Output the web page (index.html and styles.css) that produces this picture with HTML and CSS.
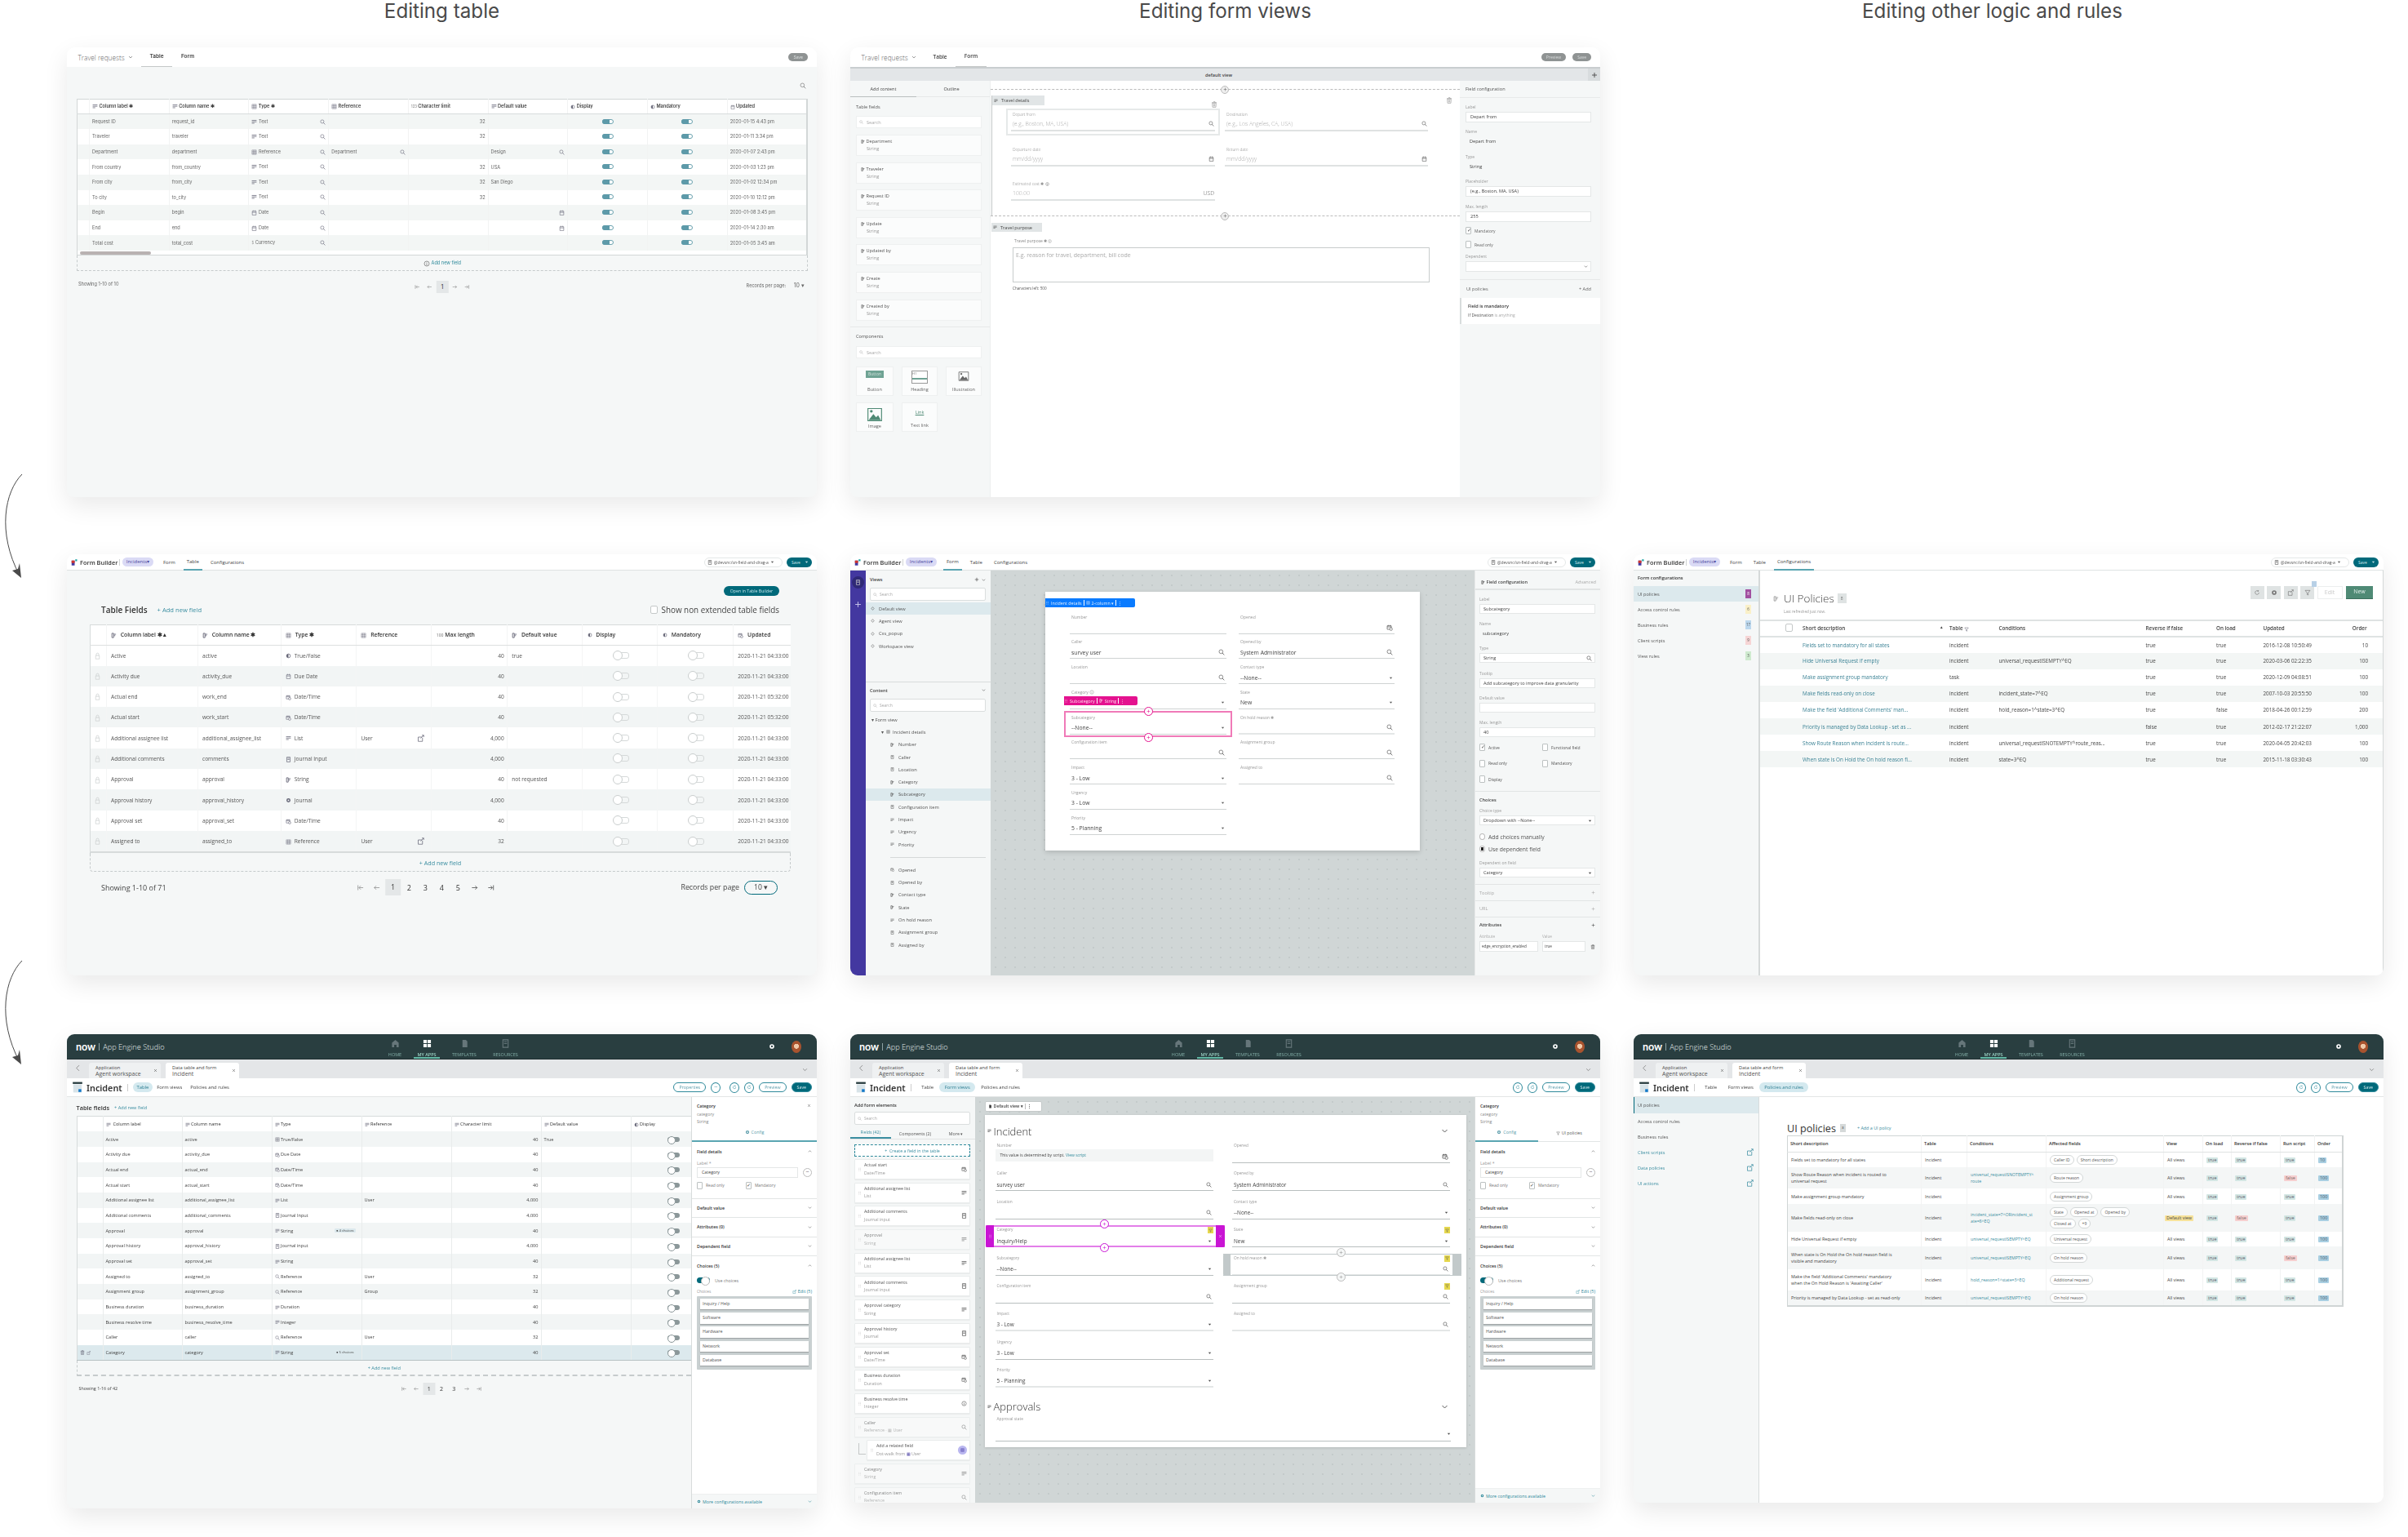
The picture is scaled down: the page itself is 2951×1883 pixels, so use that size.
FILE: index.html
```html
<!DOCTYPE html>
<html lang="en">
<head>
<meta charset="utf-8">
<title>Editing table, form views and logic</title>
<link rel="stylesheet" href="styles.css">
</head>
<body>
<svg class="sprite" aria-hidden="true">
<symbol id="s" viewBox="0 0 24 24"><circle cx="10" cy="10" r="7" fill="none" stroke="currentColor" stroke-width="2"/><path d="M15 15l7 7" stroke="currentColor" stroke-width="2.4"/></symbol>
<symbol id="cal" viewBox="0 0 24 24"><path d="M4 6h16v16H4zM4 11h16M8 2v5M16 2v5" fill="none" stroke="currentColor" stroke-width="2"/></symbol>
<symbol id="dt" viewBox="0 0 24 24"><path d="M3 5h15v13H3zM3 9h15M7 2v4M14 2v4" fill="none" stroke="currentColor" stroke-width="2"/><circle cx="17" cy="17" r="5" fill="#fff" stroke="currentColor" stroke-width="2"/></symbol>
<symbol id="ln" viewBox="0 0 24 24"><path d="M2 5h20M2 11h20M2 17h11" stroke="currentColor" stroke-width="2.6"/></symbol>
<symbol id="st" viewBox="0 0 24 24"><path d="M4 3h7v18H4zM11 7h10M11 13h7" fill="none" stroke="currentColor" stroke-width="3"/></symbol>
<symbol id="gr" viewBox="0 0 24 24"><path d="M3 3h18v18H3zM3 9h18M3 15h18M9 3v18M15 3v18" fill="none" stroke="currentColor" stroke-width="1.6"/></symbol>
<symbol id="lock" viewBox="0 0 24 24"><path d="M6 11h12v11H6zM8 11V7a4 4 0 018 0v4" fill="none" stroke="currentColor" stroke-width="1.8"/></symbol>
<symbol id="ext" viewBox="0 0 24 24"><path d="M16 8H4v14h14V10M12 12L22 2M16 2h6v6" fill="none" stroke="currentColor" stroke-width="2"/></symbol>
<symbol id="hc" viewBox="0 0 24 24"><circle cx="12" cy="12" r="8" fill="none" stroke="currentColor" stroke-width="2.6"/><path d="M12 4a8 8 0 000 16z" fill="currentColor"/></symbol>
<symbol id="chev" viewBox="0 0 24 24"><path d="M4 8l8 8 8-8" fill="none" stroke="currentColor" stroke-width="2.6"/></symbol>
<symbol id="up" viewBox="0 0 24 24"><path d="M4 16l8-8 8 8" fill="none" stroke="currentColor" stroke-width="2.6"/></symbol>
<symbol id="plus" viewBox="0 0 24 24"><path d="M12 3v18M3 12h18" stroke="currentColor" stroke-width="2.6"/></symbol>
<symbol id="car" viewBox="0 0 24 24"><path d="M4 8h16l-8 10z" fill="currentColor"/></symbol>
<symbol id="tr" viewBox="0 0 24 24"><path d="M5 7h14l-1 15H6zM3 5h18M9 2h6v3M10 10v9M14 10v9" fill="none" stroke="currentColor" stroke-width="2"/></symbol>
<symbol id="dots" viewBox="0 0 24 24"><path d="M7 4h3v3H7zM14 4h3v3h-3zM7 11h3v3H7zM14 11h3v3h-3zM7 18h3v3H7zM14 18h3v3h-3z" fill="currentColor"/></symbol>
<symbol id="gear" viewBox="0 0 24 24"><circle cx="12" cy="12" r="6" fill="none" stroke="currentColor" stroke-width="5"/></symbol>
<symbol id="fil" viewBox="0 0 24 24"><path d="M3 4h18l-7 9v8l-4-2v-6z" fill="none" stroke="currentColor" stroke-width="2"/></symbol>
<symbol id="rf" viewBox="0 0 24 24"><path d="M19 12a7 7 0 11-2-5M17 3v4h-4" fill="none" stroke="currentColor" stroke-width="2"/></symbol>
<symbol id="dia" viewBox="0 0 24 24"><path d="M12 3l8 9-8 9-8-9z" fill="none" stroke="currentColor" stroke-width="2.6"/></symbol>
<symbol id="home" viewBox="0 0 24 24"><path d="M12 2L3 10v12h6v-7h6v7h6V10z" fill="currentColor"/></symbol>
<symbol id="apps" viewBox="0 0 24 24"><path d="M2 2h9v9H2zM13 2h9v9h-9zM2 13h9v9H2zM13 13h9v9h-9z" fill="currentColor"/></symbol>
<symbol id="doc" viewBox="0 0 24 24"><path d="M6 2h9l4 4v16H6z" fill="currentColor"/></symbol>
<symbol id="book" viewBox="0 0 24 24"><path d="M5 2h14v20H5zM8 7h8M8 12h8" fill="none" stroke="currentColor" stroke-width="2.4"/></symbol>
<symbol id="info" viewBox="0 0 24 24"><circle cx="12" cy="12" r="9" fill="none" stroke="currentColor" stroke-width="2"/><path d="M12 10v8M12 6v2" stroke="currentColor" stroke-width="2"/></symbol>
<symbol id="tbl" viewBox="0 0 24 24"><path d="M2 1h20v4H2z" fill="#2b3f42"/><path d="M3 6h18v17H3z" fill="#d8e3e8"/><path d="M14 16h6v6h-6z" fill="#1479c9"/></symbol>
<symbol id="first" viewBox="0 0 24 24"><path d="M4 4v16M21 12H8M13 6l-6 6 6 6" fill="none" stroke="currentColor" stroke-width="2"/></symbol>
<symbol id="prev" viewBox="0 0 24 24"><path d="M21 12H4M10 6l-6 6 6 6" fill="none" stroke="currentColor" stroke-width="2"/></symbol>
<symbol id="next" viewBox="0 0 24 24"><path d="M3 12h17M14 6l6 6-6 6" fill="none" stroke="currentColor" stroke-width="2"/></symbol>
<symbol id="last" viewBox="0 0 24 24"><path d="M20 4v16M3 12h13M11 6l6 6-6 6" fill="none" stroke="currentColor" stroke-width="2"/></symbol>
<symbol id="back" viewBox="0 0 24 24"><path d="M16 3l-9 9 9 9" fill="none" stroke="currentColor" stroke-width="2"/></symbol>
<symbol id="img" viewBox="0 0 24 24"><path d="M2 3h20v18H2z" fill="none" stroke="currentColor" stroke-width="1.4"/><path d="M3 20l7-9 4 5 3-3 4 7z" fill="currentColor"/><circle cx="7" cy="7" r="2" fill="currentColor"/></symbol>
<symbol id="cross" viewBox="0 0 24 24"><path d="M5 5l14 14M19 5L5 19" stroke="currentColor" stroke-width="2.4"/></symbol>
</svg>

<svg class="arrow arrow-one" viewBox="0 0 30 130"><path d="M27 1C6 22-4 72 24 125" fill="none" stroke="#4a4a4a" stroke-width="1"/><path d="M26 128l-11-9 7-2 2-7z" fill="#4a4a4a"/></svg>
<svg class="arrow arrow-two" viewBox="0 0 30 130"><path d="M27 1C6 22-4 72 24 125" fill="none" stroke="#4a4a4a" stroke-width="1"/><path d="M26 128l-11-9 7-2 2-7z" fill="#4a4a4a"/></svg>

<main class="board">
<div class="titles">
<h2>Editing table</h2><h2>Editing form views</h2><h2 class="t3">Editing other logic and rules</h2>
</div>

<div class="row">
<!-- A1 -->
<section class="panel ph1 fa">
<header class="ah"><span class="ah-t">Travel requests <svg class="i6"><use href="#chev"/></svg></span><nav class="ah-n"><a class="on">Table</a><a>Form</a></nav><span class="ah-b"><b>Save</b></span></header>
<div class="a1b">
<div class="a1s"><svg class="i8"><use href="#s"/></svg></div>
<table class="tb a1t">
<colgroup><col><col><col><col><col><col><col><col><col><col></colgroup>
<tr><th></th><th><svg class="i7"><use href="#ln"/></svg> Column label ✱</th><th><svg class="i7"><use href="#ln"/></svg> Column name ✱</th><th><svg class="i7"><use href="#gr"/></svg> Type ✱</th><th><svg class="i7"><use href="#gr"/></svg> Reference</th><th><span class="dim">123</span> Character limit</th><th><svg class="i7"><use href="#ln"/></svg> Default value</th><th><svg class="i6"><use href="#hc"/></svg> Display</th><th><svg class="i6"><use href="#hc"/></svg> Mandatory</th><th><svg class="i6"><use href="#cal"/></svg> Updated</th></tr>
<tr><td></td><td>Request ID</td><td>request_id</td><td class="ty"><svg class="i7"><use href="#ln"/></svg> Text<svg class="i7 fr"><use href="#s"/></svg></td><td></td><td class="n">32</td><td></td><td class="c"><i class="ta"></i></td><td class="c"><i class="ta"></i></td><td>2020-01-15 4:43 pm</td></tr>
<tr><td></td><td>Traveler</td><td>traveler</td><td class="ty"><svg class="i7"><use href="#ln"/></svg> Text<svg class="i7 fr"><use href="#s"/></svg></td><td></td><td class="n">32</td><td></td><td class="c"><i class="ta"></i></td><td class="c"><i class="ta"></i></td><td>2020-01-11 3:34 pm</td></tr>
<tr><td></td><td>Department</td><td>department</td><td class="ty"><svg class="i7"><use href="#gr"/></svg> Reference<svg class="i7 fr"><use href="#s"/></svg></td><td class="ty">Department<svg class="i7 fr"><use href="#s"/></svg></td><td></td><td class="ty">Design<svg class="i7 fr"><use href="#s"/></svg></td><td class="c"><i class="ta"></i></td><td class="c"><i class="ta"></i></td><td>2020-01-07 2:43 pm</td></tr>
<tr><td></td><td>From country</td><td>from_country</td><td class="ty"><svg class="i7"><use href="#ln"/></svg> Text<svg class="i7 fr"><use href="#s"/></svg></td><td></td><td class="n">32</td><td>USA</td><td class="c"><i class="ta"></i></td><td class="c"><i class="ta"></i></td><td>2020-01-03 1:23 pm</td></tr>
<tr><td></td><td>From city</td><td>from_city</td><td class="ty"><svg class="i7"><use href="#ln"/></svg> Text<svg class="i7 fr"><use href="#s"/></svg></td><td></td><td class="n">32</td><td>San Diego</td><td class="c"><i class="ta"></i></td><td class="c"><i class="ta"></i></td><td>2020-01-02 12:34 pm</td></tr>
<tr><td></td><td>To city</td><td>to_city</td><td class="ty"><svg class="i7"><use href="#ln"/></svg> Text<svg class="i7 fr"><use href="#s"/></svg></td><td></td><td class="n">32</td><td></td><td class="c"><i class="ta"></i></td><td class="c"><i class="ta"></i></td><td>2020-01-10 12:12 pm</td></tr>
<tr><td></td><td>Begin</td><td>begin</td><td class="ty"><svg class="i7"><use href="#cal"/></svg> Date<svg class="i7 fr"><use href="#s"/></svg></td><td></td><td></td><td class="ty"><svg class="i7 fr"><use href="#cal"/></svg></td><td class="c"><i class="ta"></i></td><td class="c"><i class="ta"></i></td><td>2020-01-08 3:45 pm</td></tr>
<tr><td></td><td>End</td><td>end</td><td class="ty"><svg class="i7"><use href="#cal"/></svg> Date<svg class="i7 fr"><use href="#s"/></svg></td><td></td><td></td><td class="ty"><svg class="i7 fr"><use href="#cal"/></svg></td><td class="c"><i class="ta"></i></td><td class="c"><i class="ta"></i></td><td>2020-01-14 2:30 am</td></tr>
<tr><td></td><td>Total cost</td><td>total_cost</td><td class="ty"><span class="dim">$</span> Currency<svg class="i7 fr"><use href="#s"/></svg></td><td></td><td></td><td></td><td class="c"><i class="ta"></i></td><td class="c"><i class="ta"></i></td><td>2020-01-05 3:45 am</td></tr>
</table>
<div class="a1sb"><i></i></div>
<div class="addrow a1add"><svg class="i8"><use href="#info"/></svg> Add new field</div>
<div class="pg a1pg"><span>Showing 1-10 of 10</span><span class="pgc"><svg class="i7"><use href="#first"/></svg><svg class="i7"><use href="#prev"/></svg><b>1</b><svg class="i7"><use href="#next"/></svg><svg class="i7"><use href="#last"/></svg></span><span class="pgr">Records per page: <em>10 ▾</em></span></div>
</div>
</section>

<!-- A2 -->
<section class="panel ph1 fo">
<header class="ah"><span class="ah-t">Travel requests <svg class="i6"><use href="#chev"/></svg></span><nav class="ah-n ah-n2"><a>Table</a><a class="on">Form</a></nav><span class="ah-b"><b>Preview</b><b>Save</b></span></header>
<div class="a2v"><span>default view</span><i><svg class="i8"><use href="#plus"/></svg></i></div>
<div class="a2m">
<aside class="a2l">
<div class="a2tabs"><span class="on">Add content</span><span>Outline</span></div>
<h4>Table fields</h4>
<div class="a2in"><svg class="i5"><use href="#s"/></svg> Search</div>
<div class="a2c"><b><svg class="i5"><use href="#st"/></svg> Department</b><span>String</span></div>
<div class="a2c"><b><svg class="i5"><use href="#st"/></svg> Traveler</b><span>String</span></div>
<div class="a2c"><b><svg class="i5"><use href="#st"/></svg> Request ID</b><span>String</span></div>
<div class="a2c"><b><svg class="i5"><use href="#st"/></svg> Update</b><span>String</span></div>
<div class="a2c"><b><svg class="i5"><use href="#st"/></svg> Updated by</b><span>String</span></div>
<div class="a2c"><b><svg class="i5"><use href="#st"/></svg> Create</b><span>String</span></div>
<div class="a2c"><b><svg class="i5"><use href="#st"/></svg> Created by</b><span>String</span></div>
<hr class="a2hr">
<h4>Components</h4>
<div class="a2in"><svg class="i5"><use href="#s"/></svg> Search</div>
<div class="a2g">
<div><span class="btnico">Button</span><p>Button</p></div>
<div><span class="hico">H1</span><p>Heading</p></div>
<div><svg class="i14"><use href="#img"/></svg><p>Illustration</p></div>
<div><svg class="i20 green"><use href="#img"/></svg><p>Image</p></div>
<div><u class="lnk">Link</u><p>Text link</p></div>
</div>
</aside>
<div class="a2c-main">
<div class="dl"><i><svg class="i5"><use href="#plus"/></svg></i></div>
<div class="a2s">
<div class="stab"><svg class="i5"><use href="#ln"/></svg> Travel details</div>
<span class="a2tr1"><svg class="i8"><use href="#tr"/></svg></span><span class="a2tr2"><svg class="i8"><use href="#tr"/></svg></span>
<div class="a2f">
<div class="ff sel"><label>Depart from</label><div class="v ph">(e.g., Boston, MA, USA)<svg class="i7"><use href="#s"/></svg></div></div>
<div class="ff"><label>Destination</label><div class="v ph">(e.g., Los Angeles, CA, USA)<svg class="i7"><use href="#s"/></svg></div></div>
<div class="ff"><label>Departure date</label><div class="v ph">mm/dd/yyyy<svg class="i7"><use href="#cal"/></svg></div></div>
<div class="ff"><label>Return date</label><div class="v ph">mm/dd/yyyy<svg class="i7 green"><use href="#cal"/></svg></div></div>
<div class="ff"><label>Estimated cost ✱ <svg class="i5"><use href="#info"/></svg></label><div class="v ph">100.00<em>USD</em></div></div>
</div>
</div>
<div class="dl dl2"><i><svg class="i5"><use href="#plus"/></svg></i></div>
<div class="stab st2"><svg class="i5"><use href="#ln"/></svg> Travel purpose</div>
<div class="a2p"><label>Travel purpose ✱ <svg class="i5"><use href="#info"/></svg></label>
<div class="ta2">E.g. reason for travel, department, bill code</div>
<small>Characters left: 500</small></div>
</div>
<aside class="a2r">
<h4 class="a2rh">Field configuration</h4>
<div class="cf"><label>Label</label><div class="in">Depart from</div></div>
<div class="cf"><label>Name</label><div class="pl">Depart from</div></div>
<div class="cf"><label>Type</label><div class="pl">String</div></div>
<div class="cf"><label>Placeholder</label><div class="in">(e.g., Boston, MA, USA)</div></div>
<div class="cf"><label>Max. length</label><div class="in">255</div></div>
<div class="ck a2ck"><i class="on"></i>Mandatory</div>
<div class="ck a2ck"><i></i>Read only</div>
<div class="cf"><label>Dependent</label><div class="in sl"><svg class="i5"><use href="#chev"/></svg></div></div>
<div class="a2pol"><span>UI policies</span><span>+ Add</span></div>
<div class="a2card"><b>Field is mandatory</b><p><em>If Destination</em> is anything</p></div>
</aside>
</div>
</section>
<div class="empty"></div>
</div>

<div class="row r2">
<!-- B1 -->
<section class="panel ph2">
<header class="fb"><span class="fbl"><svg class="lg" viewBox="0 0 12 12"><path d="M1 3h5v8H1z" fill="#4338a0"/><path d="M1 3h5v4H1z" fill="#d0342c"/><path d="M7 1h3v3H7z" fill="#1aa3a3"/></svg><b>Form Builder</b></span><span class="fbp">Incidents▾</span><nav class="fbn"><a>Form</a><a class="on">Table</a><a>Configurations</a></nav><span class="fbr"><span class="fbs"><svg class="i6"><use href="#book"/></svg> @devsnc/sn-field-and-drag-a <svg class="i5"><use href="#car"/></svg></span><span class="fbsv">Save <svg class="i5"><use href="#car"/></svg></span></span></header>
<div class="b1b">
<div class="b1top"><span class="b1o">Open in Table Builder</span></div>
<div class="b1h"><h3>Table Fields</h3><a>+ Add new field</a><span><i class="cb"></i>Show non extended table fields</span></div>
<table class="tb b1t">
<colgroup><col><col><col><col><col><col><col><col><col><col></colgroup>
<tr><th></th><th><svg class="i7"><use href="#st"/></svg> Column label ✱ ▴</th><th><svg class="i7"><use href="#st"/></svg> Column name ✱</th><th><svg class="i7"><use href="#gr"/></svg> Type ✱</th><th><svg class="i7"><use href="#gr"/></svg> Reference</th><th><span class="dim">100</span> Max length</th><th><svg class="i7"><use href="#st"/></svg> Default value</th><th><svg class="i6"><use href="#hc"/></svg> Display</th><th><svg class="i6"><use href="#hc"/></svg> Mandatory</th><th><svg class="i7"><use href="#dt"/></svg> Updated</th></tr>
<tr><td><svg class="i9 lk"><use href="#lock"/></svg></td><td>Active</td><td>active</td><td><svg class="i7"><use href="#hc"/></svg> True/False</td><td></td><td class="n">40</td><td>true</td><td class="c"><i class="tf"></i></td><td class="c"><i class="tf"></i></td><td>2020-11-21 04:33:00</td></tr>
<tr><td><svg class="i9 lk"><use href="#lock"/></svg></td><td>Activity due</td><td>activity_due</td><td><svg class="i7"><use href="#cal"/></svg> Due Date</td><td></td><td class="n">40</td><td></td><td class="c"><i class="tf"></i></td><td class="c"><i class="tf"></i></td><td>2020-11-21 04:33:00</td></tr>
<tr><td><svg class="i9 lk"><use href="#lock"/></svg></td><td>Actual end</td><td>work_end</td><td><svg class="i7"><use href="#dt"/></svg> Date/Time</td><td></td><td class="n">40</td><td></td><td class="c"><i class="tf"></i></td><td class="c"><i class="tf"></i></td><td>2020-11-21 05:32:00</td></tr>
<tr><td><svg class="i9 lk"><use href="#lock"/></svg></td><td>Actual start</td><td>work_start</td><td><svg class="i7"><use href="#dt"/></svg> Date/Time</td><td></td><td class="n">40</td><td></td><td class="c"><i class="tf"></i></td><td class="c"><i class="tf"></i></td><td>2020-11-21 05:32:00</td></tr>
<tr><td><svg class="i9 lk"><use href="#lock"/></svg></td><td>Additional assignee list</td><td>additional_assignee_list</td><td><svg class="i7"><use href="#ln"/></svg> List</td><td class="ty">User<svg class="i9 fr"><use href="#ext"/></svg></td><td class="n">4,000</td><td></td><td class="c"><i class="tf"></i></td><td class="c"><i class="tf"></i></td><td>2020-11-21 04:33:00</td></tr>
<tr><td><svg class="i9 lk"><use href="#lock"/></svg></td><td>Additional comments</td><td>comments</td><td><svg class="i7"><use href="#book"/></svg> Journal Input</td><td></td><td class="n">4,000</td><td></td><td class="c"><i class="tf"></i></td><td class="c"><i class="tf"></i></td><td>2020-11-21 04:33:00</td></tr>
<tr><td><svg class="i9 lk"><use href="#lock"/></svg></td><td>Approval</td><td>approval</td><td><svg class="i7"><use href="#st"/></svg> String</td><td></td><td class="n">40</td><td>not requested</td><td class="c"><i class="tf"></i></td><td class="c"><i class="tf"></i></td><td>2020-11-21 04:33:00</td></tr>
<tr><td><svg class="i9 lk"><use href="#lock"/></svg></td><td>Approval history</td><td>approval_history</td><td><svg class="i7"><use href="#gear"/></svg> Journal</td><td></td><td class="n">4,000</td><td></td><td class="c"><i class="tf"></i></td><td class="c"><i class="tf"></i></td><td>2020-11-21 04:33:00</td></tr>
<tr><td><svg class="i9 lk"><use href="#lock"/></svg></td><td>Approval set</td><td>approval_set</td><td><svg class="i7"><use href="#dt"/></svg> Date/Time</td><td></td><td class="n">40</td><td></td><td class="c"><i class="tf"></i></td><td class="c"><i class="tf"></i></td><td>2020-11-21 04:33:00</td></tr>
<tr><td><svg class="i9 lk"><use href="#lock"/></svg></td><td>Assigned to</td><td>assigned_to</td><td><svg class="i7"><use href="#gr"/></svg> Reference</td><td class="ty">User<svg class="i9 fr"><use href="#ext"/></svg></td><td class="n">32</td><td></td><td class="c"><i class="tf"></i></td><td class="c"><i class="tf"></i></td><td>2020-11-21 04:33:00</td></tr>
</table>
<div class="addrow b1add">+ Add new field</div>
<div class="pg b1pg"><span>Showing 1-10 of 71</span><span class="pgc"><svg class="i9"><use href="#first"/></svg><svg class="i9"><use href="#prev"/></svg><b>1</b><u>2</u><u>3</u><u>4</u><u>5</u><svg class="i9 dk"><use href="#next"/></svg><svg class="i9 dk"><use href="#last"/></svg></span><span class="pgr">Records per page <em>10 ▾</em></span></div>
</div>
</section>

<!-- B2 -->
<section class="panel ph2">
<header class="fb"><span class="fbl"><svg class="lg" viewBox="0 0 12 12"><path d="M1 3h5v8H1z" fill="#4338a0"/><path d="M1 3h5v4H1z" fill="#d0342c"/><path d="M7 1h3v3H7z" fill="#1aa3a3"/></svg><b>Form Builder</b></span><span class="fbp">Incidents▾</span><nav class="fbn"><a class="on">Form</a><a>Table</a><a>Configurations</a></nav><span class="fbr"><span class="fbs"><svg class="i6"><use href="#book"/></svg> @devsnc/sn-field-and-drag-a <svg class="i5"><use href="#car"/></svg></span><span class="fbsv">Save <svg class="i5"><use href="#car"/></svg></span></span></header>
<div class="b2m">
<div class="rail"><i><svg class="i7"><use href="#book"/></svg></i><svg class="i9"><use href="#plus"/></svg></div>
<aside class="b2l">
<div class="b2sec"><span>Views</span><em><svg class="i6"><use href="#plus"/></svg><svg class="i5"><use href="#chev"/></svg></em></div>
<div class="b2in"><svg class="i5"><use href="#s"/></svg> Search</div>
<ul class="tree tv">
<li class="on"><svg class="i5"><use href="#dia"/></svg> Default view</li>
<li><svg class="i5"><use href="#dia"/></svg> Agent view</li>
<li><svg class="i5"><use href="#dia"/></svg> Cxs_popup</li>
<li><svg class="i5"><use href="#dia"/></svg> Workspace view</li>
</ul>
<div class="b2sec b2sec2"><span>Content</span><em><svg class="i5"><use href="#chev"/></svg></em></div>
<div class="b2in"><svg class="i5"><use href="#s"/></svg> Search</div>
<ul class="tree tc">
<li class="l0">▾ Form view</li>
<li class="l1">▾ <svg class="i5"><use href="#gr"/></svg> Incident details</li>
<li class="l2"><svg class="i5"><use href="#st"/></svg> Number</li>
<li class="l2"><svg class="i5"><use href="#book"/></svg> Caller</li>
<li class="l2"><svg class="i5"><use href="#book"/></svg> Location</li>
<li class="l2"><svg class="i5"><use href="#st"/></svg> Category</li>
<li class="l2 on"><svg class="i5"><use href="#st"/></svg> Subcategory</li>
<li class="l2"><svg class="i5"><use href="#book"/></svg> Configuration item</li>
<li class="l2"><svg class="i5"><use href="#ln"/></svg> Impact</li>
<li class="l2"><svg class="i5"><use href="#ln"/></svg> Urgency</li>
<li class="l2"><svg class="i5"><use href="#ln"/></svg> Priority</li>
<li class="sep"></li>
<li class="l2"><svg class="i5"><use href="#dt"/></svg> Opened</li>
<li class="l2"><svg class="i5"><use href="#book"/></svg> Opened by</li>
<li class="l2"><svg class="i5"><use href="#st"/></svg> Contact type</li>
<li class="l2"><svg class="i5"><use href="#st"/></svg> State</li>
<li class="l2"><svg class="i5"><use href="#ln"/></svg> On hold reason</li>
<li class="l2"><svg class="i5"><use href="#book"/></svg> Assignment group</li>
<li class="l2"><svg class="i5"><use href="#book"/></svg> Assigned by</li>
</ul>
</aside>
<div class="canvas b2c">
<div class="b2card">
<div class="blu"><svg class="i5"><use href="#dots"/></svg> Incident details <s></s> <svg class="i5"><use href="#gr"/></svg> 2-column ▾ <s></s> ⋮</div>
<div class="b2g">
<div class="bf"><label>Number</label><div class="v"></div></div>
<div class="bf"><label>Opened</label><div class="v"><svg class="i8"><use href="#dt"/></svg></div></div>
<div class="bf"><label>Caller</label><div class="v">survey user<svg class="i8"><use href="#s"/></svg></div></div>
<div class="bf"><label>Opened by</label><div class="v">System Administrator<svg class="i8"><use href="#s"/></svg></div></div>
<div class="bf"><label>Location</label><div class="v"><svg class="i8"><use href="#s"/></svg></div></div>
<div class="bf"><label>Contact type</label><div class="v">--None--<svg class="i5"><use href="#car"/></svg></div></div>
<div class="bf cat"><label>Category <svg class="i6"><use href="#info"/></svg></label><div class="v"><svg class="i5"><use href="#car"/></svg></div><div class="pnk"><svg class="i5"><use href="#dots"/></svg> Subcategory <s></s> <svg class="i5"><use href="#st"/></svg> String <s></s> ⋮</div></div>
<div class="bf"><label>State</label><div class="v">New<svg class="i5"><use href="#car"/></svg></div></div>
<div class="bf sub"><label>Subcategory</label><div class="v">--None--<svg class="i5"><use href="#car"/></svg></div><i class="pc pc1"><svg class="i5"><use href="#plus"/></svg></i><i class="pc pc2"><svg class="i5"><use href="#plus"/></svg></i></div>
<div class="bf"><label>On hold reason ✱</label><div class="v lt"><svg class="i8"><use href="#s"/></svg></div></div>
<div class="bf"><label>Configuration item</label><div class="v"><svg class="i8"><use href="#s"/></svg></div></div>
<div class="bf"><label>Assignment group</label><div class="v"><svg class="i8"><use href="#s"/></svg></div></div>
<div class="bf"><label>Impact</label><div class="v">3 - Low<svg class="i5"><use href="#car"/></svg></div></div>
<div class="bf"><label>Assigned to</label><div class="v"><svg class="i8"><use href="#s"/></svg></div></div>
<div class="bf"><label>Urgency</label><div class="v">3 - Low<svg class="i5"><use href="#car"/></svg></div></div>
<div></div>
<div class="bf"><label>Priority</label><div class="v">5 - Planning<svg class="i5"><use href="#car"/></svg></div></div>
</div>
</div>
</div>
<aside class="b2r">
<div class="b2rh"><b><svg class="i5"><use href="#st"/></svg> Field configuration</b><span>Advanced</span></div>
<div class="cg"><label>Label</label><div class="in">Subcategory</div></div>
<div class="cg"><label>Name</label><div class="pl">subcategory</div></div>
<div class="cg"><label>Type</label><div class="in">String<svg class="i7"><use href="#s"/></svg></div></div>
<div class="cg"><label>Tooltip</label><div class="in">Add subcategory to improve data granularity</div></div>
<div class="cg"><label>Default value</label><div class="in"></div></div>
<div class="cg"><label>Max. length</label><div class="in">40</div></div>
<div class="b2cks"><div class="ck"><i class="on"></i>Active</div><div class="ck"><i></i>Functional field</div><div class="ck"><i></i>Read only</div><div class="ck"><i></i>Mandatory</div><div class="ck"><i></i>Display</div></div>
<div class="b2bk">
<h5>Choices</h5>
<div class="cg"><label>Choice type</label><div class="in">Dropdown with --None--<svg class="i5"><use href="#car"/></svg></div></div>
<div class="rd"><i></i>Add choices manually</div>
<div class="rd"><i class="on"></i>Use dependent field</div>
<div class="cg dp"><label>Dependent on field</label><div class="in">Category<svg class="i5"><use href="#car"/></svg></div></div>
</div>
<div class="b2col"><span>Tooltip</span><svg class="i5"><use href="#plus"/></svg></div>
<div class="b2col"><span>URL</span><svg class="i5"><use href="#plus"/></svg></div>
<div class="b2col dk"><b>Attributes</b><svg class="i5"><use href="#plus"/></svg></div>
<div class="attr"><div><label>Attribute</label><div class="in">edge_encryption_enabled</div></div><div><label>Value</label><div class="in">true</div></div><svg class="i6"><use href="#tr"/></svg></div>
</aside>
</div>
</section>

<!-- B3 -->
<section class="panel ph2">
<header class="fb"><span class="fbl"><svg class="lg" viewBox="0 0 12 12"><path d="M1 3h5v8H1z" fill="#4338a0"/><path d="M1 3h5v4H1z" fill="#d0342c"/><path d="M7 1h3v3H7z" fill="#1aa3a3"/></svg><b>Form Builder</b></span><span class="fbp">Incidents▾</span><nav class="fbn"><a>Form</a><a>Table</a><a class="on">Configurations</a></nav><span class="fbr"><span class="fbs"><svg class="i6"><use href="#book"/></svg> @devsnc/sn-field-and-drag-a <svg class="i5"><use href="#car"/></svg></span><span class="fbsv">Save <svg class="i5"><use href="#car"/></svg></span></span></header>
<div class="b3m">
<aside class="b3l">
<h5>Form configurations</h5>
<ul><li class="on">UI policies<i class="bp">8</i></li><li>Access control rules<i class="by">6</i></li><li>Business rules<i class="bb">17</i></li><li>Client scripts<i class="br">9</i></li><li>View rules<i class="bg">3</i></li></ul>
</aside>
<div class="b3r">
<div class="b3h">
<svg class="i7"><use href="#st"/></svg>
<div class="b3ti"><h3>UI Policies <i>8</i></h3><small>Last refreshed just now.</small></div>
<div class="b3b"><i><svg class="i8"><use href="#rf"/></svg></i><i><svg class="i8"><use href="#gear"/></svg></i><i><svg class="i8"><use href="#ext"/></svg></i><i class="fbadge"><svg class="i8"><use href="#fil"/></svg></i><span class="edit">Edit</span><span class="new">New</span></div>
</div>
<table class="tb b3t">
<colgroup><col><col><col><col><col><col><col><col></colgroup>
<tr><th><i class="cb"></i></th><th>Short description <span class="fr">▴</span></th><th>Table <svg class="i6"><use href="#fil"/></svg></th><th>Conditions</th><th>Reverse if false</th><th>On load</th><th>Updated</th><th>Order</th></tr>
<tr><td></td><td class="l">Fields set to mandatory for all states</td><td>incident</td><td></td><td>true</td><td>true</td><td>2016-12-08 10:50:49</td><td class="n">10</td></tr>
<tr><td></td><td class="l">Hide Universal Request if empty</td><td>incident</td><td>universal_requestISEMPTY^EQ</td><td>true</td><td>true</td><td>2020-03-06 02:22:35</td><td class="n">100</td></tr>
<tr><td></td><td class="l">Make assignment group mandatory</td><td>task</td><td></td><td>true</td><td>true</td><td>2020-12-09 04:08:51</td><td class="n">100</td></tr>
<tr><td></td><td class="l">Make fields read-only on close</td><td>incident</td><td>incident_state=7^EQ</td><td>true</td><td>true</td><td>2007-10-03 20:55:50</td><td class="n">100</td></tr>
<tr><td></td><td class="l">Make the field 'Additional Comments' man...</td><td>incident</td><td>hold_reason=1^state=3^EQ</td><td>true</td><td>false</td><td>2018-04-26 00:12:59</td><td class="n">200</td></tr>
<tr><td></td><td class="l">Priority is managed by Data Lookup - set as ...</td><td>incident</td><td></td><td>false</td><td>true</td><td>2012-02-17 21:22:07</td><td class="n">1,000</td></tr>
<tr><td></td><td class="l">Show Route Reason when incident is route...</td><td>incident</td><td>universal_requestISNOTEMPTY^route_reas...</td><td>true</td><td>true</td><td>2020-04-05 20:42:03</td><td class="n">100</td></tr>
<tr><td></td><td class="l">When state is On Hold the On hold reason fi...</td><td>incident</td><td>state=3^EQ</td><td>true</td><td>true</td><td>2015-11-18 03:30:43</td><td class="n">100</td></tr>
</table>
</div>
</div>
</section>
</div>

<div class="row r3">
<!-- C1 -->
<section class="panel ph3">
<header class="cb1"><span class="brand"><b>now</b><s></s>App Engine Studio</span><nav class="cnav"><a><svg class="i11"><use href="#home"/></svg>HOME</a><a class="on"><svg class="i11"><use href="#apps"/></svg>MY APPS</a><a><svg class="i11"><use href="#doc"/></svg>TEMPLATES</a><a><svg class="i11"><use href="#book"/></svg>RESOURCES</a></nav><span class="cu"><svg class="i8"><use href="#gear"/></svg><i class="av"></i></span></header>
<div class="ctabs"><svg class="i9 bk"><use href="#back"/></svg><div class="ct"><b>Application</b><span>Agent workspace</span><svg class="i5"><use href="#cross"/></svg></div><div class="ct on"><b>Data table and form</b><span>Incident</span><svg class="i5"><use href="#cross"/></svg></div><svg class="i7 ctc"><use href="#chev"/></svg></div>
<div class="ctitle t1"><svg class="i14"><use href="#tbl"/></svg><h3>Incident</h3><s></s><a class="on">Table</a><a>Form views</a><a>Policies and rules</a><span class="cact"><em>Properties</em><u>•••</u><u class="gp"><svg class="i6"><use href="#rf"/></svg></u><u><svg class="i6"><use href="#rf"/></svg></u><em>Preview</em><em class="sv">Save</em></span></div>
<div class="c1m">
<div class="c1b">
<div class="c1h"><h4>Table fields</h4><a>+ Add new field</a></div>
<table class="tb c1t">
<colgroup><col><col><col><col><col><col><col><col></colgroup>
<tr><th></th><th><svg class="i6"><use href="#ln"/></svg> &nbsp;Column label</th><th><svg class="i6"><use href="#ln"/></svg> Column name</th><th><svg class="i6"><use href="#ln"/></svg> Type</th><th><svg class="i6"><use href="#ln"/></svg> Reference</th><th><svg class="i6"><use href="#ln"/></svg> Character limit</th><th><svg class="i6"><use href="#ln"/></svg> Default value</th><th><svg class="i6"><use href="#hc"/></svg> Display</th></tr>
<tr><td></td><td>Active</td><td>active</td><td><svg class="i6"><use href="#gr"/></svg> True/False</td><td></td><td class="n">40</td><td>True</td><td class="tr"><i class="tc2"></i></td></tr>
<tr><td></td><td>Activity due</td><td>activity_due</td><td><svg class="i6"><use href="#dt"/></svg> Due Date</td><td></td><td class="n">40</td><td></td><td class="tr"><i class="tc2"></i></td></tr>
<tr><td></td><td>Actual end</td><td>actual_end</td><td><svg class="i6"><use href="#dt"/></svg> Date/Time</td><td></td><td class="n">40</td><td></td><td class="tr"><i class="tc2"></i></td></tr>
<tr><td></td><td>Actual start</td><td>actual_start</td><td><svg class="i6"><use href="#dt"/></svg> Date/Time</td><td></td><td class="n">40</td><td></td><td class="tr"><i class="tc2"></i></td></tr>
<tr><td></td><td>Additional assignee list</td><td>additional_assignee_list</td><td><svg class="i6"><use href="#ln"/></svg> List</td><td>User</td><td class="n">4,000</td><td></td><td class="tr"><i class="tc2"></i></td></tr>
<tr><td></td><td>Additional comments</td><td>additional_comments</td><td><svg class="i6"><use href="#book"/></svg> Journal Input</td><td></td><td class="n">4,000</td><td></td><td class="tr"><i class="tc2"></i></td></tr>
<tr><td></td><td>Approval</td><td>approval</td><td class="ty"><svg class="i6"><use href="#ln"/></svg> String<span class="chip">● 4 choices</span></td><td></td><td class="n">40</td><td></td><td class="tr"><i class="tc2"></i></td></tr>
<tr><td></td><td>Approval history</td><td>approval_history</td><td><svg class="i6"><use href="#book"/></svg> Journal input</td><td></td><td class="n">4,000</td><td></td><td class="tr"><i class="tc2"></i></td></tr>
<tr><td></td><td>Approval set</td><td>approval_set</td><td><svg class="i6"><use href="#ln"/></svg> String</td><td></td><td class="n">40</td><td></td><td class="tr"><i class="tc2"></i></td></tr>
<tr><td></td><td>Assigned to</td><td>assigned_to</td><td><svg class="i6"><use href="#s"/></svg> Reference</td><td>User</td><td class="n">32</td><td></td><td class="tr"><i class="tc2"></i></td></tr>
<tr><td></td><td>Assignment group</td><td>assignment_group</td><td><svg class="i6"><use href="#s"/></svg> Reference</td><td>Group</td><td class="n">32</td><td></td><td class="tr"><i class="tc2"></i></td></tr>
<tr><td></td><td>Business duration</td><td>business_duration</td><td><svg class="i6"><use href="#ln"/></svg> Duration</td><td></td><td class="n">40</td><td></td><td class="tr"><i class="tc2"></i></td></tr>
<tr><td></td><td>Business resolve time</td><td>business_resolve_time</td><td><svg class="i6"><use href="#ln"/></svg> Integer</td><td></td><td class="n">40</td><td></td><td class="tr"><i class="tc2"></i></td></tr>
<tr><td></td><td>Caller</td><td>caller</td><td><svg class="i6"><use href="#s"/></svg> Reference</td><td>User</td><td class="n">32</td><td></td><td class="tr"><i class="tc2"></i></td></tr>
<tr class="act"><td><svg class="i6"><use href="#tr"/></svg> &nbsp;<svg class="i5"><use href="#ext"/></svg></td><td>Category</td><td>category</td><td class="ty"><svg class="i6"><use href="#ln"/></svg> String<span class="chip nb">● 5 choices</span></td><td></td><td class="n">40</td><td></td><td class="tr"><i class="tc2"></i></td></tr>
</table>
<div class="addrow c1add">+ Add new field</div>
<div class="pg c1pg"><span>Showing 1-16 of 42</span><span class="pgc"><svg class="i7"><use href="#first"/></svg><svg class="i7"><use href="#prev"/></svg><b>1</b><u>2</u><u>3</u><svg class="i7"><use href="#next"/></svg><svg class="i7"><use href="#last"/></svg></span></div>
</div>
<aside class="cr">
<div class="crh"><b>Category</b><span>category</span><span>String</span><svg class="i5"><use href="#cross"/></svg></div>
<div class="crt"><span class="on"><svg class="i6"><use href="#gear"/></svg> Config</span></div>
<div class="cra open"><b>Field details</b><svg class="i5"><use href="#up"/></svg></div>
<div class="crf"><label>Label *</label><div class="crin"><div class="in">Category</div><u>•••</u></div><div class="crck"><div class="ck"><i></i>Read only</div><div class="ck"><i class="on"></i>Mandatory</div></div></div>
<div class="cra"><b>Default value</b><svg class="i5"><use href="#chev"/></svg></div>
<div class="cra"><b>Attributes (0)</b><svg class="i5"><use href="#chev"/></svg></div>
<div class="cra"><b>Dependent field</b><svg class="i5"><use href="#chev"/></svg></div>
<div class="cra open nob"><b>Choices (5)</b><svg class="i5"><use href="#up"/></svg></div>
<div class="crch"><div class="utog"><i></i>Use choices</div><div class="crl"><span>Choices</span><a><svg class="i5"><use href="#ext"/></svg> Edit (5)</a></div><ul class="chs"><li>Inquiry / Help</li><li>Software</li><li>Hardware</li><li>Network</li><li>Database</li></ul></div>
<div class="crm"><span><svg class="i5"><use href="#gear"/></svg> More configurations available</span><svg class="i5"><use href="#chev"/></svg></div>
</aside>
</div>
</section>

<!-- C2 -->
<section class="panel ph4">
<header class="cb1"><span class="brand"><b>now</b><s></s>App Engine Studio</span><nav class="cnav"><a><svg class="i11"><use href="#home"/></svg>HOME</a><a class="on"><svg class="i11"><use href="#apps"/></svg>MY APPS</a><a><svg class="i11"><use href="#doc"/></svg>TEMPLATES</a><a><svg class="i11"><use href="#book"/></svg>RESOURCES</a></nav><span class="cu"><svg class="i8"><use href="#gear"/></svg><i class="av"></i></span></header>
<div class="ctabs"><svg class="i9 bk"><use href="#back"/></svg><div class="ct"><b>Application</b><span>Agent workspace</span><svg class="i5"><use href="#cross"/></svg></div><div class="ct on"><b>Data table and form</b><span>Incident</span><svg class="i5"><use href="#cross"/></svg></div><svg class="i7 ctc"><use href="#chev"/></svg></div>
<div class="ctitle"><svg class="i14"><use href="#tbl"/></svg><h3>Incident</h3><s></s><a>Table</a><a class="on">Form views</a><a>Policies and rules</a><span class="cact"><u class="gp"><svg class="i6"><use href="#rf"/></svg></u><u><svg class="i6"><use href="#rf"/></svg></u><em>Preview</em><em class="sv">Save</em></span></div>
<div class="c2m">
<aside class="c2l">
<h5>Add form elements</h5>
<div class="b2in c2in"><svg class="i5"><use href="#s"/></svg> Search</div>
<div class="c2t"><span class="on">Fields (42)</span><span>Components (2)</span><span>More ▾</span></div>
<div class="c2cr">+ &nbsp;Create a field in the table</div>
<div class="c2cd"><svg class="i5 dg"><use href="#dots"/></svg><div><b>Actual start</b><span>Date/Time</span></div><svg class="i7"><use href="#dt"/></svg></div>
<div class="c2cd"><svg class="i5 dg"><use href="#dots"/></svg><div><b>Additional assignee list</b><span>List</span></div><svg class="i7"><use href="#ln"/></svg></div>
<div class="c2cd"><svg class="i5 dg"><use href="#dots"/></svg><div><b>Additional comments</b><span>Journal input</span></div><svg class="i7"><use href="#book"/></svg></div>
<div class="c2cd off"><svg class="i5 dg"><use href="#dots"/></svg><div><b>Approval</b><span>String</span></div><svg class="i7"><use href="#ln"/></svg></div>
<div class="c2cd"><svg class="i5 dg"><use href="#dots"/></svg><div><b>Additional assignee list</b><span>List</span></div><svg class="i7"><use href="#ln"/></svg></div>
<div class="c2cd"><svg class="i5 dg"><use href="#dots"/></svg><div><b>Additional comments</b><span>Journal input</span></div><svg class="i7"><use href="#book"/></svg></div>
<div class="c2cd"><svg class="i5 dg"><use href="#dots"/></svg><div><b>Approval category</b><span>String</span></div><svg class="i7"><use href="#ln"/></svg></div>
<div class="c2cd"><svg class="i5 dg"><use href="#dots"/></svg><div><b>Approval history</b><span>Journal</span></div><svg class="i7"><use href="#book"/></svg></div>
<div class="c2cd"><svg class="i5 dg"><use href="#dots"/></svg><div><b>Approval set</b><span>Date/Time</span></div><svg class="i7"><use href="#dt"/></svg></div>
<div class="c2cd"><svg class="i5 dg"><use href="#dots"/></svg><div><b>Business duration</b><span>Duration</span></div><svg class="i7"><use href="#dt"/></svg></div>
<div class="c2cd"><svg class="i5 dg"><use href="#dots"/></svg><div><b>Business resolve time</b><span>Integer</span></div><svg class="i7"><use href="#info"/></svg></div>
<div class="c2cd off"><svg class="i5 dg"><use href="#dots"/></svg><div><b>Caller</b><span>Reference · ▦ User</span></div><svg class="i7"><use href="#s"/></svg></div>
<div class="c2cd rel"><svg class="i5 dg"><use href="#dots"/></svg><div><b>Add a related field</b><span>Dot-walk from <em>▦</em> User</span></div><i><svg class="i5"><use href="#gr"/></svg></i></div>
<div class="c2cd off"><svg class="i5 dg"><use href="#dots"/></svg><div><b>Category</b><span>String</span></div><svg class="i7"><use href="#ln"/></svg></div>
<div class="c2cd off"><svg class="i5 dg"><use href="#dots"/></svg><div><b>Configuration item</b><span>Reference</span></div><svg class="i7"><use href="#s"/></svg></div>
</aside>
<div class="canvas c2c">
<div class="dv"><svg class="i5"><use href="#doc"/></svg> Default view ▾ <s></s> ⋮</div>
<div class="c2card">
<div class="c2sec"><h3><svg class="i5"><use href="#ln"/></svg> Incident</h3><svg class="i9"><use href="#chev"/></svg></div>
<div class="c2g">
<div class="gf"><label>Number</label><div class="sc">This value is determined by script. <a>View script</a></div></div>
<div class="gf"><label>Opened</label><div class="v"><svg class="i8"><use href="#dt"/></svg></div></div>
<div class="gf"><label>Caller</label><div class="v">survey user<svg class="i7"><use href="#s"/></svg></div></div>
<div class="gf"><label>Opened by</label><div class="v">System Administrator<svg class="i7"><use href="#s"/></svg></div></div>
<div class="gf"><label>Location</label><div class="v"><svg class="i7"><use href="#s"/></svg></div></div>
<div class="gf"><label>Contact type</label><div class="v">--None--<svg class="i5"><use href="#car"/></svg></div></div>
<div class="gf mag"><label>Category</label><div class="v">Inquiry/Help<svg class="i5"><use href="#car"/></svg></div><span class="yc"><svg class="i5"><use href="#fil"/></svg></span><i class="mb mbl"><svg class="i5"><use href="#dots"/></svg></i><i class="mb mbr"><svg class="i5"><use href="#cross"/></svg></i><i class="pc pm1"><svg class="i5"><use href="#plus"/></svg></i><i class="pc pm2"><svg class="i5"><use href="#plus"/></svg></i></div>
<div class="gf"><label>State</label><div class="v">New<svg class="i5"><use href="#car"/></svg></div><span class="yc"><svg class="i5"><use href="#fil"/></svg></span></div>
<div class="gf"><label>Subcategory</label><div class="v">--None--<svg class="i5"><use href="#car"/></svg></div></div>
<div class="gf gry"><label>On hold reason ✱</label><div class="v lt"><svg class="i7"><use href="#s"/></svg></div><span class="yc"><svg class="i5"><use href="#fil"/></svg></span><i class="gb gbl"></i><i class="gb gbr"></i><i class="pc pg1"><svg class="i5"><use href="#plus"/></svg></i><i class="pc pg2"><svg class="i5"><use href="#plus"/></svg></i></div>
<div class="gf"><label>Configuration item</label><div class="v"><svg class="i7"><use href="#s"/></svg></div></div>
<div class="gf"><label>Assignment group</label><div class="v"><svg class="i7"><use href="#s"/></svg></div><span class="yc"><svg class="i5"><use href="#fil"/></svg></span></div>
<div class="gf"><label>Impact</label><div class="v lt">3 - Low<svg class="i5"><use href="#car"/></svg></div></div>
<div class="gf"><label>Assigned to</label><div class="v lt"><svg class="i7"><use href="#s"/></svg></div></div>
<div class="gf"><label>Urgency</label><div class="v">3 - Low<svg class="i5"><use href="#car"/></svg></div></div>
<div></div>
<div class="gf"><label>Priority</label><div class="v lt">5 - Planning<svg class="i5"><use href="#car"/></svg></div></div>
</div>
<div class="c2sec c2sec2"><h3><svg class="i5"><use href="#ln"/></svg> Approvals</h3><svg class="i9"><use href="#chev"/></svg></div>
<div class="gf wide"><label>Approval state</label><div class="v"><svg class="i5"><use href="#car"/></svg></div></div>
</div>
</div>
<aside class="cr cr2">
<div class="crh"><b>Category</b><span>category</span><span>String</span></div>
<div class="crt two"><span class="on"><svg class="i6"><use href="#gear"/></svg> Config</span><span><svg class="i5"><use href="#fil"/></svg> UI policies</span></div>
<div class="cra open"><b>Field details</b><svg class="i5"><use href="#up"/></svg></div>
<div class="crf"><label>Label *</label><div class="crin"><div class="in">Category</div><u>•••</u></div><div class="crck"><div class="ck"><i></i>Read only</div><div class="ck"><i class="on"></i>Mandatory</div></div></div>
<div class="cra"><b>Default value</b><svg class="i5"><use href="#chev"/></svg></div>
<div class="cra"><b>Attributes (0)</b><svg class="i5"><use href="#chev"/></svg></div>
<div class="cra"><b>Dependent field</b><svg class="i5"><use href="#chev"/></svg></div>
<div class="cra open nob"><b>Choices (5)</b><svg class="i5"><use href="#up"/></svg></div>
<div class="crch"><div class="utog"><i></i>Use choices</div><div class="crl"><span>Choices</span><a><svg class="i5"><use href="#ext"/></svg> Edit (5)</a></div><ul class="chs"><li>Inquiry / Help</li><li>Software</li><li>Hardware</li><li>Network</li><li>Database</li></ul></div>
<div class="crm"><span><svg class="i5"><use href="#gear"/></svg> More configurations available</span><svg class="i5"><use href="#chev"/></svg></div>
</aside>
</div>
</section>

<!-- C3 -->
<section class="panel ph4">
<header class="cb1"><span class="brand"><b>now</b><s></s>App Engine Studio</span><nav class="cnav"><a><svg class="i11"><use href="#home"/></svg>HOME</a><a class="on"><svg class="i11"><use href="#apps"/></svg>MY APPS</a><a><svg class="i11"><use href="#doc"/></svg>TEMPLATES</a><a><svg class="i11"><use href="#book"/></svg>RESOURCES</a></nav><span class="cu"><svg class="i8"><use href="#gear"/></svg><i class="av"></i></span></header>
<div class="ctabs"><svg class="i9 bk"><use href="#back"/></svg><div class="ct"><b>Application</b><span>Agent workspace</span><svg class="i5"><use href="#cross"/></svg></div><div class="ct on"><b>Data table and form</b><span>Incident</span><svg class="i5"><use href="#cross"/></svg></div><svg class="i7 ctc"><use href="#chev"/></svg></div>
<div class="ctitle"><svg class="i14"><use href="#tbl"/></svg><h3>Incident</h3><s></s><a>Table</a><a>Form views</a><a class="on">Policies and rules</a><span class="cact"><u class="gp"><svg class="i6"><use href="#rf"/></svg></u><u><svg class="i6"><use href="#rf"/></svg></u><em>Preview</em><em class="sv">Save</em></span></div>
<div class="c3m">
<aside class="c3l"><ul><li class="on">UI policies</li><li>Access control rules</li><li>Business rules</li><li class="lk2">Client scripts<svg class="i9"><use href="#ext"/></svg></li><li class="lk2">Data policies<svg class="i9"><use href="#ext"/></svg></li><li class="lk2">UI actions<svg class="i9"><use href="#ext"/></svg></li></ul></aside>
<div class="c3r">
<div class="c3h"><h3>UI policies</h3><i>8</i><a>+ Add a UI policy</a></div>
<table class="tb c3t">
<colgroup><col><col><col><col><col><col><col><col><col></colgroup>
<tr><th>Short description</th><th>Table</th><th>Conditions</th><th>Affected fields</th><th>View</th><th>On load</th><th>Reverse if false</th><th>Run script</th><th>Order</th></tr>
<tr class="h19"><td>Fields set to mandatory for all states</td><td>Incident</td><td></td><td><i class="p">Caller ID</i><i class="p">Short description</i></td><td>All views</td><td><i class="t">true</i></td><td><i class="t">true</i></td><td><i class="t">true</i></td><td><i class="o">10</i></td></tr>
<tr class="h26"><td>Show Route Reason when incident is routed to<br>universal request</td><td>Incident</td><td class="l">universal_requestISNOTEMPTY^<br>route</td><td><i class="p">Route reason</i></td><td>All views</td><td><i class="t">true</i></td><td><i class="t">true</i></td><td><i class="f">false</i></td><td><i class="o">100</i></td></tr>
<tr class="h19"><td>Make assignment group mandatory</td><td>Incident</td><td></td><td><i class="p">Assignment group</i></td><td>All views</td><td><i class="t">true</i></td><td><i class="t">true</i></td><td><i class="t">true</i></td><td><i class="o">100</i></td></tr>
<tr class="h34"><td>Make fields read-only on close</td><td>Incident</td><td class="l">incident_state=7^ORincident_st<br>ate=8^EQ</td><td><i class="p">State</i><i class="p">Opened at</i><i class="p">Opened by</i><br><i class="p">Closed at</i><i class="p">+9</i></td><td><i class="dvw">Default view</i></td><td><i class="t">true</i></td><td><i class="f">false</i></td><td><i class="t">true</i></td><td><i class="o">100</i></td></tr>
<tr class="h18"><td>Hide Universal Request if empty</td><td>Incident</td><td class="l">universal_requestISEMPTY^EQ</td><td><i class="p">Universal request</i></td><td>All views</td><td><i class="t">true</i></td><td><i class="t">true</i></td><td><i class="t">true</i></td><td><i class="o">100</i></td></tr>
<tr class="h27"><td>When state is On Hold the On hold reason field is<br>visible and mandatory</td><td>Incident</td><td class="l">universal_requestISEMPTY^EQ</td><td><i class="p">On hold reason</i></td><td>All views</td><td><i class="t">true</i></td><td><i class="t">true</i></td><td><i class="f">false</i></td><td><i class="o">100</i></td></tr>
<tr class="h26"><td>Make the field 'Additional Comments' mandatory<br>when the On Hold Reason is 'Awaiting Caller'</td><td>Incident</td><td class="l">hold_reason=1^state=3^EQ</td><td><i class="p">Additional request</i></td><td>All views</td><td><i class="t">true</i></td><td><i class="t">true</i></td><td><i class="t">true</i></td><td><i class="o">100</i></td></tr>
<tr class="h19"><td>Priority is managed by Data Lookup - set as read-only</td><td>Incident</td><td class="l">universal_requestISEMPTY^EQ</td><td><i class="p">On hold reason</i></td><td>All views</td><td><i class="t">true</i></td><td><i class="t">true</i></td><td><i class="t">true</i></td><td><i class="o">100</i></td></tr>
</table>
</div>
</div>
</section>
</div>
</main>
</body>
</html>
```

FILE: styles.css
```css
*{box-sizing:border-box}
html,body{margin:0;padding:0}
body{width:2951px;height:1883px;background:#fff;overflow:hidden;position:relative;font-family:"Open Sans","Noto Sans",sans-serif;color:#333f41;font-size:6px}
h2,h3,h4,h5,p,ul{margin:0;padding:0}
ul{list-style:none}
i,em,u,s{font-style:normal;text-decoration:none}
a{color:inherit}
svg{display:inline-block;vertical-align:middle;flex:none}
.sprite{position:absolute;width:0;height:0}
.i5{width:5px;height:5px}.i6{width:6px;height:6px}.i7{width:7px;height:7px}.i8{width:8px;height:8px}.i9{width:9px;height:9px}.i11{width:11px;height:11px}.i14{width:14px;height:14px}.i20{width:20px;height:20px}
.green{color:#4f8a75}
.fr{float:right}
.dim{color:#999;font-size:.75em}
.arrow{position:absolute;left:0;width:30px;height:130px}
.arrow-one{top:580px}
.arrow-two{top:1176px}

.board{padding-left:82px;width:2951px}
.titles{display:flex;gap:41px;height:58px}
.titles h2{width:919px;text-align:center;font:400 24.2px/28px Inter,sans-serif;color:#4a4a4a}
.titles .t3{padding-right:40px}
.row{display:flex;gap:41px;align-items:flex-start}
.r2{margin-top:70px}
.r3{margin-top:72px}
.empty{width:919px}
.panel{width:919px;background:#f5f7f7;border-radius:9px;overflow:hidden;display:flex;flex-direction:column;box-shadow:0 10px 30px rgba(0,0,0,.09);filter:blur(.35px)}
.ph1{height:551px;filter:blur(.5px)}.ph2{height:516px}.ph3{height:581px}.ph4{height:574px}

.tb{border-collapse:collapse;table-layout:fixed;width:100%}
.tb th,.tb td{padding:0 3px;white-space:nowrap;overflow:hidden;text-align:left;font-weight:400}
.tb th{font-weight:600}
.tb .n{text-align:right}
.tb .c{text-align:center}
.tb .tr{text-align:right;padding-right:17px}
.tb svg{color:#667}
.addrow{border:1px dashed #c6cbcc;border-top:0;text-align:center}
.pg{display:flex;align-items:center;position:relative}
.pgc{position:absolute;left:50%;transform:translateX(-50%);display:flex;align-items:center;color:#888}
.pgc b{background:#e4e7e8;font-weight:400;color:#333;text-align:center}
.pgc u{color:#333;text-align:center}
.pgc .dk{color:#444}
.pgr{margin-left:auto}
.pgr em{margin-left:8px}

/* row 1 shared header */
.fa{font-family:Inter,sans-serif}
.ah{height:24px;background:#fff;display:flex;align-items:stretch;padding-left:13.5px;flex:none}
.ah-t{font-size:8.3px;font-family:"Open Sans",sans-serif;font-weight:300;color:#666;width:77.5px;display:flex;align-items:center;gap:4px;white-space:nowrap}
.ah-n{display:flex;font-size:6.5px;font-weight:600}
.ah-n a{width:38px;display:flex;align-items:center;justify-content:center;padding-bottom:2px;color:#444}
.ah-n a.on{border-bottom:1px solid #c4c8c8}
.ah-b{margin-left:auto;display:flex;gap:8px;align-items:center;padding-right:11px}
.ah-b b{background:#8f9393;color:#d8dcdc;height:10px;line-height:10px;border-radius:5px;padding:0 6px;font-size:5px;font-weight:400}

.a1b{padding:0 11px 0 12px;position:relative;font-size:5.6px;color:#666;flex:1}
.a1s{height:38.5px;text-align:right;padding:19px 2px 0 0;color:#777}
.a1t{border:1px solid #d3d7d7;border-width:1px 2px 0 1px;background:#fff}
.a1t col:nth-child(1){width:15px}.a1t col{width:97.4px}
.a1t tr{height:18.6px}
.a1t th{color:#444;background:#fff;border-bottom:1px solid #d8dcdc}
.a1t tr:nth-child(even) td{background:#f3f6f5}
.a1t tr:nth-child(n+2) td{padding:0 3px 0 3px}
.a1t td+td,.a1t th+th{border-left:1px solid #f2f3f3}
.a1t .ty{padding-right:4px}
.ta{display:inline-block;width:14px;height:6px;border-radius:3px;background:#fff;border:1px solid #6ba3b0;position:relative}
.ta:before{content:"";position:absolute;left:-1px;top:-1px;width:9px;height:6px;background:#5d9aa9;border-radius:3px 0 0 3px}
.a1sb{height:6.5px;background:#fff;border:1px solid #d3d7d7;border-width:0 2px 1px 1px;padding:1px 0 0 3px}
.a1sb i{display:block;width:87px;height:4.5px;border-radius:2px;background:#b9b2b2}
.a1add{height:19px;line-height:18px;color:#2e8a9b;font-size:5.6px}
.a1add svg{color:#666}
.a1pg{height:30px;padding:0 4px 0 2px;margin-top:13px;align-items:flex-start;font-size:5.6px}
.a1pg .pgc{top:-1px}
.a1pg .pgc svg{margin:0 4.15px}
.a1pg .pgc b{width:15.3px;height:15px;line-height:15px;font-size:7px}
.a1pg .pgr em{font-size:7px}

/* A2 */
.fo{font-family:"Open Sans",sans-serif;font-weight:400;font-size:5.6px;color:#666}
.ah-n2{padding-left:0}
.ah-n2 a{width:38px}
.a2v{height:17px;background:#e3e6e8;border-top:2px solid #c9cdcf;display:flex;align-items:center;justify-content:center;font-weight:600;color:#444;position:relative;flex:none}
.a2v span{padding-right:16px}
.a2v i{position:absolute;right:0;top:0;bottom:0;width:15px;background:#d8dcde;display:flex;align-items:center;justify-content:center}
.a2m{flex:1;display:flex;min-height:0}
.a2l{width:172px;border-right:1px solid #eceeee;flex:none;padding:0}
.a2tabs{display:flex;height:20px;border-bottom:1px solid #e6e8e8;color:#444}
.a2tabs span{width:86px;display:flex;align-items:center;justify-content:center;font-weight:400}
.a2tabs .on{width:81px;border-bottom:1px solid #b9bebf;height:20px}
.a2l h4{font-size:5.6px;font-weight:400;color:#555;padding:9px 7px 8px;line-height:6px}
.a2in{margin:0 10px 8px 7px;height:15px;background:#fff;border:1px solid #eef0f0;display:flex;align-items:center;gap:4px;padding-left:3px;color:#aaa}
.a2c{margin:0 10px 7.6px 7px;height:26px;background:#fbfcfc;border:1px solid #eef0f0;padding:3px 5px;line-height:9px}
.a2c b{display:block;font-weight:400;color:#555}
.a2c span{display:block;padding-left:7px;color:#999}
.a2hr{border:0;border-top:1px solid #e6e8e8;margin:1.5px 0 0}
.a2l .a2hr + h4{padding:8px 7px 9px}
.a2g{display:grid;grid-template-columns:46px 44px 44px;column-gap:10px;row-gap:8px;padding:2px 0 0 7px}
.a2g div{height:36px;background:#fbfcfc;border:1px solid #eef0f0;text-align:center;padding-top:4px;display:flex;flex-direction:column;align-items:center;justify-content:space-between;padding-bottom:3px}
.btnico{background:#6fa394;color:#cfe0da;width:22px;height:9px;line-height:9px;font-size:5px}
.hico{width:20px;height:16px;border:1px solid #999;font-size:4px;text-align:left;line-height:5px;background:linear-gradient(#fff 55%,#6fa394 55%,#6fa394 72%,#fff 72%)}
.lnk{color:#4f8a75;text-decoration:underline;padding-top:3px}
.a2c-main{width:575px;background:#fff;flex:none;position:relative}
.dl{height:0;border-top:1px dashed #bbb;margin-top:10px;position:relative}
.dl i,.pc{position:absolute;width:10px;height:10px;border-radius:50%;border:1px solid #bbb;background:#eee;display:flex;align-items:center;justify-content:center}
.dl i{left:282px;top:-5.5px}
.dl2{margin-top:0}
.a2s{border-left:1px solid #c4c8c8;margin-left:1px;height:147px;margin-top:7px;position:relative;box-sizing:border-box}
.stab{height:12px;width:64px;background:#e1e5e6;color:#444;font-weight:400;display:flex;align-items:center;gap:4px;padding-left:2px;white-space:nowrap}
.a2tr1,.a2tr2{position:absolute;top:1px;color:#999}
.a2tr1{left:268px;top:6px}.a2tr2{left:556px;top:1px}
.a2f{display:grid;grid-template-columns:250px 249px;column-gap:12px;grid-auto-rows:42.5px;padding:7px 0 0 23px}
.ff{height:28px;position:relative;font-weight:300}
.ff label{display:block;height:8px;line-height:8px;padding-left:2px;font-size:5px;color:#888;white-space:nowrap}
.ff .v{height:17px;padding:0 1px 0 2px;line-height:13px;border-bottom:2px solid #dfe2e2;display:flex;justify-content:space-between;align-items:center;font-size:6.8px;color:#aaa}
.ff em{color:#555}
.ff svg{color:#555}
.sel:before{content:"";position:absolute;left:-6px;right:-6px;top:-3.5px;bottom:-2px;border:2px solid #e6e9e9;pointer-events:none}
.st2{margin:8px 0 0 1px;width:62px;height:11px}
.a2p{padding:7px 0 0 27px}
.a2p label{font-size:5px;color:#888;display:block;padding-left:2px;height:8px;line-height:8px;margin-bottom:4px}
.ta2{width:511px;height:43px;border:1px solid #c8cccc;font-size:7px;padding:4px 3px;color:#aaa}
.a2p small{display:block;font-size:4.6px;color:#555;margin-top:4px}
.a2r{flex:1;padding:0}
.a2rh{height:21px;line-height:20px;font-size:5.6px;font-weight:400;padding-left:7px;border-bottom:1px solid #e8eaea;color:#555;margin-bottom:8px}
.cf{height:30.4px;padding:0 11px 0 7px}
.cf label,.cg label{display:block;font-size:5px;color:#999;line-height:7px;height:9px}
.in{height:13px;background:#fff;border:1px solid #e4e7e7;padding-left:5px;line-height:11px;color:#444;display:flex;align-items:center;justify-content:space-between;padding-right:3px;white-space:nowrap;overflow:hidden}
.sl{justify-content:flex-end}
.pl{height:13px;line-height:13px;padding-left:5px;color:#444}
.ck{display:flex;align-items:center;gap:4px;white-space:nowrap}
.ck i{width:7px;height:9px;border:1px solid #bcc1c1;background:#fff;border-radius:1px;position:relative;flex:none}
.ck i.on:after{content:"✓";position:absolute;left:.5px;top:-1px;font-size:6px;line-height:9px;color:#444}
.a2ck{height:17px;padding-left:7px;font-size:5px}
.cf + .a2ck{margin-top:-5.5px}
.a2ck + .cf{margin-top:3px}
.a2pol{height:24px;border-top:1px solid #e6e8e8;display:flex;justify-content:space-between;align-items:center;padding:0 11px 0 8px}
.a2card{margin-top:-.5px;background:#fff;border-left:2px solid #d8dcdc;height:32px;padding:6px 8px}
.a2card b{font-weight:600;color:#333;display:block;line-height:8px}
.a2card p{color:#aaa;line-height:8px;margin-top:3px;font-size:5px}
.a2card em{color:#555}

/* row 2 header */
.fb{height:20px;background:#fff;border-bottom:1px solid #dfe3e3;display:flex;align-items:stretch;flex:none;padding-left:5px;font-size:6px}
.fbl{display:flex;align-items:center;gap:2px;width:63px;font-size:7.4px;position:relative}
.fbl b{font-weight:600;color:#333;white-space:nowrap}
.fbl:after{content:"";position:absolute;right:3px;top:6px;height:8px;border-left:1px solid #d0d3d3}
.lg{width:9px;height:10px}
.fbp{align-self:center;height:11px;line-height:11px;border-radius:6px;background:#dadaf5;color:#4a47a0;padding:0 3px;width:38px;text-align:center;white-space:nowrap;font-size:6px}
.fbn{display:flex;margin-left:8px;gap:0;font-size:6px;color:#444}
.fbn a{padding:0 4px;margin-right:6px;display:flex;align-items:center;border-bottom:1px solid transparent;height:20px}
.fbn a.on{border-bottom:2px solid #5aa5b2}
.fbr{margin-left:auto;display:flex;align-items:center;gap:5px;padding-right:6px}
.fbs{height:12px;width:96px;border:1px solid #e4e7e7;border-radius:6px;display:flex;align-items:center;padding:0 3px;gap:2px;font-size:5px;white-space:nowrap;overflow:hidden;color:#555}
.fbsv{height:12px;width:31px;border-radius:6px;background:#00697a;color:#cfe6ea;display:flex;align-items:center;justify-content:space-between;padding:0 4px 0 6px;font-size:5px}

/* B1 */
.b1b{padding:0 32px 0 28px;flex:1}
.b1top{height:30.5px;padding-top:18.5px;display:flex;justify-content:flex-end;padding-right:14px}
.b1o{width:68px;height:12px;line-height:12px;background:#00697a;color:#bfe0e6;border-radius:6px;text-align:center;font-size:5.2px;white-space:nowrap}
.b1h{display:flex;align-items:center;height:35px;padding:0 14px}
.b1h h3{font-size:10px;font-weight:600;color:#333}
.b1h a{color:#3b8ea1;margin-left:12px;font-size:7.6px}
.b1h span{margin-left:auto;font-size:9.9px;display:flex;align-items:center;gap:4px;color:#444}
.cb{display:inline-block;width:9px;height:10px;border:1px solid #c4c8c8;border-radius:2px;background:#fff}
.b1t{border:1px solid #d7dbdb;border-width:1px 0 0 1px;border-radius:4px 4px 0 0;font-size:6.6px}
.b1t col:nth-child(1){width:19.5px}.b1t col:nth-child(2){width:112px}.b1t col:nth-child(3){width:102px}.b1t col{width:92.4px}.b1t col:nth-child(10){width:71px}
.b1t tr{height:25.3px}
.b1t th,.b1t td{padding-left:5.5px}
.b1t td:first-child{padding-left:4px}
.b1t th{font-size:6.8px;background:#fff;border-bottom:1px solid #dde0e0;color:#333}
.b1t th svg{margin-right:3px}
.b1t td svg{margin-right:2px}
.b1t .fr{margin:0 5px 0 0}
.b1t td{color:#555}
.b1t tr:nth-child(odd) td{background:#f2f5f5}
.b1t tr:nth-child(even) td{background:#fff}
.b1t td+td,.b1t th+th{border-left:1px solid #f4f5f5}
.b1t .lk{color:#c8cccc}
.tf{display:inline-block;width:20px;height:10px;position:relative}
.tf:before{content:"";position:absolute;left:6px;top:2px;right:0;height:6px;border:1px solid #d5d9d9;border-radius:0 3px 3px 0}
.tf:after{content:"";position:absolute;left:0;top:0;width:10px;height:10px;border:1px solid #c9cdcd;border-radius:50%;background:#fff}
.b1add{height:25px;line-height:24px;border-top:2px solid #d7dbdb;border-radius:0 0 4px 4px;color:#3b8ea1;font-size:7.2px}
.b1pg{padding:0 16px 0 14px;height:30px;margin-top:4px;font-size:9px;color:#444}
.b1pg .pgc b{width:19.6px;height:20px;line-height:20px}
.b1pg .pgc u{width:20px}
.b1pg .pgc svg{margin:0 5.5px}
.b1pg .pgc{left:50%;margin-left:-18px}
.b1pg .pgr{display:flex;align-items:center;font-size:8.8px}
.b1pg em{height:17px;width:41px;border:1.5px solid #00697a;border-radius:9px;text-align:center;line-height:14px;margin-left:6px;font-size:8.6px}

/* B2 */
.b2m{flex:1;display:flex;min-height:0;font-size:5.7px;color:#555}
.rail{width:19px;background:#4338a0;flex:none;display:flex;flex-direction:column;align-items:center;padding-top:7px;gap:15px;color:#c4c2e8}
.rail i{width:15px;height:15px;border-radius:50%;background:#2f2976;display:flex;align-items:center;justify-content:center;color:#ccc}
.b2l{width:153px;flex:none;display:flex;flex-direction:column;background:#f5f7f7;padding-top:6px}
.b2sec{display:flex;justify-content:space-between;align-items:center;height:10px;padding:0 6px 0 5px;font-weight:600;font-size:5.6px;color:#444}
.b2sec em{display:flex;gap:3px;align-items:center}
.b2sec2{border-top:1px solid #d8dcdc;height:21px;margin-top:5px;flex:none}
.b2sec2 + .b2in{margin-top:.5px}
.b2in{margin:5px 6px 2px 5px;height:16px;background:#fff;border:1px solid #dadede;border-radius:2px;display:flex;align-items:center;gap:3px;padding-left:3px;color:#aaa;font-size:5px;flex:none}
.tv{height:91.5px;flex:none}
.tree li{height:15.3px;display:flex;align-items:center;white-space:nowrap;gap:5px;padding-left:6px}
.tree li.on{background:#dce9ed}
.tree .l0{padding-left:7px;gap:3px}
.tree .l1{padding-left:19px;gap:3px}
.tree .l2{padding-left:30px;gap:5px}
.tree .sep{height:0;margin:7.4px 6px 7.6px 30px;border-top:1px solid #d5d9d9;padding:0}
.canvas{background-color:#d0d6d6;background-image:radial-gradient(#b4bcbc .6px,transparent .8px);background-size:12px 12px}
.b2c{width:593px;flex:none;padding:26px 67px 0}
.b2card{height:317px;background:#fff;box-shadow:0 2px 6px rgba(0,0,0,.16);position:relative;padding-top:8px}
.blu{height:11px;width:110px;background:#0a7bff;color:#dcecff;display:flex;align-items:center;gap:2px;white-space:nowrap;font-size:5.3px;border-radius:0 2px 2px 0;margin-bottom:6px}
.blu s,.pnk s{height:7px;border-left:1px solid #fff}
.b2g{display:grid;grid-template-columns:192px 191px;column-gap:15px;grid-auto-rows:30.75px;padding-left:30px}
.bf{height:24px;position:relative}
.bf label{display:block;height:7px;line-height:7px;padding-left:2px;font-size:5px;color:#999;margin-top:2.5px;white-space:nowrap}
.bf .v{height:15px;margin-top:2px;border-bottom:1px solid #cfd3d3;display:flex;justify-content:space-between;align-items:center;padding:0 2px;font-size:6.8px;color:#444;flex-direction:row}
.bf .v svg:only-child{margin-left:auto}
.bf .v.lt{border-bottom:2px solid #e4e7e7}
.bf .v svg{color:#555}
.cat .pnk{position:absolute;left:-7px;top:11px;height:11px;width:90px;background:#e4128f;color:#ffd9ee;display:flex;align-items:center;gap:2px;font-size:5.3px;white-space:nowrap;border-radius:0 2px 2px 0}
.sub:before{content:"";position:absolute;left:-7px;right:-7px;top:-2px;bottom:-6px;border:2px solid #f07ab8}
.pc{width:11px;height:11px;border-color:#e4128f;background:#fff;color:#e4128f;left:91px;z-index:2}
.pc1{top:-7px}.pc2{top:25px}
.b2r{flex:1;background:#f5f7f7;border-left:1px solid #e8eaea}
.b2rh{height:24px;padding:6px 5px 0 7px;border-bottom:2px solid #e2e5e5;display:flex;justify-content:space-between;align-items:center;font-size:5.6px;color:#aaa}
.b2rh b{font-weight:600;color:#444}
.cg{height:30.2px;padding:0 6px 0 5px}
.b2rh+.cg{margin-top:8px}
.cg .in,.cg .pl{height:12px;font-size:5.6px;line-height:12px;padding-left:4px}
.b2cks{display:grid;grid-template-columns:77px 1fr;grid-auto-rows:19.4px;padding:0 0 0 5px;height:63px;font-size:5px;margin-top:-6px}
.b2bk{border-top:1px solid #e2e5e5;height:114px}
.b2bk h5{font-size:5.6px;font-weight:600;padding:6px 6px 0 5px;line-height:8px;color:#444}
.b2bk .cg{height:27.7px;margin-top:6px}
.rd{display:flex;align-items:center;height:14.8px;gap:4px;padding-left:5px;font-size:6.8px}
.rd i{width:7px;height:8px;border-radius:50%;border:1px solid #bbb;background:#fff}
.rd i.on{background:radial-gradient(#222 50%,#fff 55%)}
.b2bk .dp{margin-top:7px}
.b2col{height:19.9px;border-top:1px solid #e2e5e5;display:flex;justify-content:space-between;align-items:center;padding:0 6px 0 5px;color:#aaa;font-size:5.6px}
.b2col.dk{color:#444}
.b2col b{font-weight:600}
.attr{display:flex;gap:3px;padding:1.6px 3px 0 5px;align-items:flex-end;font-size:4.6px}
.attr>div:nth-child(1){width:72px}.attr>div:nth-child(2){width:53px;margin-left:2px}
.attr label{color:#aaa;display:block;height:9px}
.attr .in{height:13px;padding-left:2px;font-size:4.6px}
.attr svg{margin:0 0 3px 3px}

/* B3 */
.b3m{flex:1;display:flex;min-height:0;font-size:6.3px;color:#444}
.b3l{width:153px;flex:none}
.b3l h5{height:19px;line-height:19px;padding-left:5px;font-size:5.7px;font-weight:600;color:#333}
.b3l li{height:19.1px;display:flex;justify-content:space-between;align-items:center;padding:0 9px 0 5px;font-size:5.6px;color:#555}
.b3l li.on{background:#dce9ed}
.b3l li i{width:7px;height:11px;line-height:11px;text-align:center;font-size:4.5px}
.bp{background:#a14fa0;color:#fff}.by{background:#faf0c8}.bb{background:#bcd8ee}.br{background:#f6d5d5}.bg{background:#cfeacf}
.b3r{flex:1;background:#fff;border-left:2px solid #d5d9d9;border-right:1px solid #d5d9d9;min-width:0}
.b3h{height:60px;display:flex;padding:26px 12px 0 16px;align-items:flex-start;border-bottom:1px solid transparent;position:relative}
.b3h>svg{margin:5px 6px 0 0;color:#999}
.b3ti h3{font-size:13.5px;font-weight:300;line-height:16px;display:flex;align-items:center;gap:4px}
.b3ti h3 i{width:11px;height:12px;line-height:12px;background:#dfe3e3;font-size:5px;text-align:center}
.b3ti small{font-size:4.6px;color:#999;display:block;margin-top:5px}
.b3b{margin-left:auto;margin-top:-7px;display:flex;gap:3.5px;align-items:flex-start}
.b3b i{width:17px;height:16px;background:#dfe3e3;display:flex;align-items:center;justify-content:center;color:#777;position:relative}
.fbadge:before{content:"";position:absolute;right:-3px;top:-6px;width:6px;height:7px;background:#b8d0e6}
.b3b .edit{width:31px;height:16px;border:1px solid #eceeee;text-align:center;line-height:14px;color:#ccc;font-size:7px}
.b3b .new{width:33px;height:16px;background:#4f8a75;color:#e3f0ec;text-align:center;line-height:14px;border-bottom:1px solid #3a6f5c;font-size:7px;margin-left:1px}
.b3t{border-top:2px solid #dfe3e3}
.b3t col:nth-child(1){width:49px}.b3t col:nth-child(2){width:180px}.b3t col:nth-child(3){width:60.5px}.b3t col:nth-child(4){width:180px}.b3t col:nth-child(5){width:86.5px}.b3t col:nth-child(6){width:57.5px}.b3t col:nth-child(7){width:100px}
.b3t tr{height:20.1px}
.b3t tr:first-child{height:19.5px}
.b3t th{border-bottom:2px solid #dfe3e3;font-weight:600}
.b3t th .cb{margin-left:28px}
.b3t tr:nth-child(odd) td{background:#f3f6f5}
.b3t .l{color:#3b8295}
.b3t .fr{font-size:5px;margin-right:2px}
.b3t td:last-child,.b3t th:last-child{padding-right:18px;text-align:right}
.b3t th:last-child{text-align:center;padding-right:10px}

/* row 3 */
.cb1{height:31px;background:#293e40;display:flex;flex:none;color:#e5ecec;border-bottom:1px solid #1e2d2f}
.brand{width:391px;display:flex;align-items:center;padding-left:11px;font-size:9.2px;font-weight:300;white-space:nowrap;flex:none}
.brand b{font-family:Lato,sans-serif;font-size:12.5px;font-weight:700;color:#fff}
.brand s{height:9px;border-left:1px solid #8fa3a5;margin:0 4px}
.cnav{display:flex;gap:12px;align-items:stretch}
.cnav a{display:flex;flex-direction:column;align-items:center;padding-top:6px;font-size:5.5px;color:#7fa9a2;white-space:nowrap;gap:4px;font-weight:500;justify-content:flex-start}
.cnav a:nth-child(1){width:22px}.cnav a:nth-child(2){width:32px}.cnav a:nth-child(3){width:36px}.cnav a:nth-child(4){width:41px}
.cnav svg{color:#66767a}
.cnav .on{color:#9ad1c3;border-bottom:2px solid #62b8a5;font-weight:600}
.cnav .on svg{color:#fff}
.cu{margin-left:auto;display:flex;align-items:center;gap:20px;padding-right:19px;color:#fff}
.av{width:12px;height:15px;border-radius:50%;background:radial-gradient(circle at 50% 45%,#efc9a8 28%,#a8532e 32%)}
.ctabs{height:23px;background:#e4e6e8;display:flex;align-items:flex-end;padding-left:9px;flex:none;position:relative;font-size:5.6px}
.ctabs .bk{align-self:center;margin-right:9px;color:#777;margin-bottom:3px}
.ct{width:88px;height:19px;background:#eff1f2;border-radius:3px 3px 0 0;padding:3px 0 0 8px;position:relative;margin-right:6px;color:#444}
.ct.on{background:#fff;width:90px}
.ct b{display:block;font-weight:500;font-size:5.8px;line-height:7.4px;white-space:nowrap}
.ct span{display:block;font-size:7px;line-height:7.6px;color:#555;white-space:nowrap}
.ct svg{position:absolute;right:4px;top:7px}
.ctc{position:absolute;right:11px;top:9px;color:#777}
.ctitle{height:23px;background:#fff;border-bottom:1px solid #e3e6e6;display:flex;align-items:center;padding:0 6px;flex:none;font-size:5.9px;color:#444}
.ctitle h3{font-size:10.8px;font-weight:600;color:#333;margin-left:4px;font-family:"Noto Sans",sans-serif}
.ctitle>s{height:9px;border-left:1px solid #ccc;margin:0 6px}
.ctitle a{padding:0 6.5px;height:12px;line-height:12px;border-radius:6px;margin-right:.5px;white-space:nowrap}
.ctitle.t1 a{padding:0 4.7px}
.ctitle a.on{background:#d4e9ef;color:#2f7f93}
.cact{margin-left:auto;display:flex;align-items:center;gap:6px}
.cact em{height:12px;padding:0 6px;line-height:10px;border-radius:6px;border:1px solid #2f8a9b;color:#5c9cab;font-size:5.3px}
.cact u{width:12px;height:13px;border-radius:50%;border:1px solid #2f8a9b;color:#2f8a9b;display:flex;align-items:center;justify-content:center;font-size:3px}
.cact .gp{margin-left:5px}
.cact .sv{background:#00697a;color:#cfe6ea}
.c1m{flex:1;display:flex;min-height:0}
.c1b{width:765px;padding:0 0 0 11.5px;flex:none;font-size:5.6px;color:#444}
.c1h{height:23px;display:flex;align-items:center;gap:6px;padding-top:2px}
.c1h h4{font-size:7.4px;font-weight:600;color:#333}
.c1h a{color:#3b8ea1;font-size:5.6px}
.c1t{border:1px solid #d7dbdb;border-width:1px 0 0 1px;width:753.5px}
.c1t col:nth-child(1){width:32px}.c1t col:nth-child(2){width:97px}.c1t col{width:110px}.c1t col:nth-child(8){width:76.5px}
.c1t tr{height:18.7px}
.c1t th{background:#fff;font-weight:400;color:#333;font-size:5.6px}
.c1t tr:nth-child(even) td{background:#f2f5f5}
.c1t tr:nth-child(odd) td{background:#fff}
.c1t td+td,.c1t th+th{border-left:1px solid #e9ecec}
.c1t tr.act td{background:#dce9ed;border-bottom:1px solid #b8c2c4}
.chip{float:right;background:#dce9ed;padding:0 2px;font-size:4.2px;border-radius:1px;margin:1px 4px 0 0}
.chip.nb{background:none}
.tc2{display:inline-block;width:15px;height:6px;background:#8b9799;border-radius:3px;position:relative;vertical-align:middle}
.tc2:after{content:"";position:absolute;left:0;top:-1px;width:8px;height:8px;border-radius:50%;background:#fff;border:1px solid #8b9799}
.c1add{height:19px;line-height:18px;color:#3b8ea1;width:753.5px;border-right:0;border-bottom-width:2px}
.c1pg{height:30px;padding-left:3px;width:753.5px;font-size:5.4px}
.c1pg .pgc{left:447.5px}
.c1pg .pgc svg{margin:0 4.15px}
.c1pg .pgc b{width:15.3px;height:15px;line-height:15px;font-size:7px}
.c1pg .pgc u{font-size:7px;width:15.3px}
.cr{flex:1;background:#fff;border-left:1px solid #d8dcdc;display:flex;flex-direction:column;font-size:5.3px;color:#555;min-width:0;position:relative}
.cr2{width:154px;flex:none;border-left:1px solid #d8dcdc}
.crh{height:33px;padding:7px 6px 0 6px;position:relative;line-height:9.5px}
.crh b{display:block;font-weight:600;color:#333}
.crh span{display:block;color:#888}
.crh svg{position:absolute;right:7px;top:8px}
.crt{height:22px;display:flex;border-bottom:1px solid #e2e5e5;position:relative}
.crt span{flex:1;display:flex;align-items:center;justify-content:center;gap:2px;height:22px;color:#5c9cab}
.crt .on{border-bottom:2px solid #5aa5b2}
.crt.two span:nth-child(2){color:#555}
.cra{height:23.5px;display:flex;justify-content:space-between;align-items:center;padding:0 6px;border-bottom:1px solid #e2e5e5}
.cra.open{border-bottom:0}
.cra b{font-weight:600;color:#333}
.crf{padding:0 6px;height:46px;border-bottom:1px solid #e2e5e5}
.crf label{display:block;color:#999;height:7px;line-height:5px}
.crin{display:flex;gap:6px;align-items:center}
.crin .in{flex:1;height:13px}
.crin u{width:11px;height:11px;border-radius:50%;border:1px solid #bbb;font-size:3px;display:flex;align-items:center;justify-content:center}
.crck{display:flex;gap:26px;padding-top:5px;font-size:5px;color:#777}
.crch{padding:0 6px}
.utog{display:flex;align-items:center;gap:6px;height:12px;color:#777}
.utog i{width:16px;height:7px;background:#00697a;border-radius:4px;position:relative}
.utog i:after{content:"";position:absolute;right:0;top:-1px;width:9px;height:9px;border-radius:50%;background:#fff;border:1px solid #bbb}
.crl{display:flex;justify-content:space-between;padding-top:4px;height:13px;line-height:7px;color:#999;font-size:4.8px}
.crl a{color:#2f8a9b;font-size:5.4px}
.chs{background:#c9d0d1;padding:3px 4px;border-radius:1px;height:90px;margin-top:.5px}
.chs li{height:13.4px;line-height:13px;background:#fff;margin-bottom:3.8px;padding-left:3px;box-shadow:0 1px 1px rgba(0,0,0,.2)}
.crm{position:absolute;left:0;right:0;bottom:0;height:18px;background:#f5f7f7;display:flex;justify-content:space-between;align-items:center;padding:0 6px;color:#2f8a9b;border-top:1px solid #eef0f0}
.crm span{display:flex;align-items:center;gap:2px}

/* C2 */
.c2m{flex:1;display:flex;min-height:0;font-size:5.3px;color:#555}
.c2l{width:153px;flex:none;background:#f5f7f7;overflow:hidden;padding-top:7px}
.c2l h5{font-size:5.6px;font-weight:600;padding-left:5px;line-height:7px;color:#333}
.c2in{margin:4px 6px 0 5px;height:16px}
.c2t{display:flex;height:15.5px;margin-top:2px;align-items:flex-end;border-bottom:1px solid #e2e5e5}
.c2t span{padding-bottom:2px;width:48px;height:15.5px;display:flex;align-items:flex-end;justify-content:center;white-space:nowrap}
.c2t span:nth-child(2){width:60px}.c2t span:nth-child(3){width:40px}
.c2t .on{width:49.5px;color:#3b8ea1;border-bottom:2px solid #3b8ea1}
.c2cr{margin:6.5px 6px 3px 5px;height:15px;border:1px dashed #2f8a9b;color:#3b8ea1;display:flex;align-items:center;justify-content:center;background:#fff}
.c2cd{margin:0 6px 3.7px 5px;height:25px;background:#fff;border:1px solid #e9ecec;border-radius:1px;display:flex;align-items:center;padding:0 3px;gap:3px;box-shadow:0 1px 1px rgba(0,0,0,.05);line-height:9.4px}
.c2cd div{flex:1;white-space:nowrap}
.c2cd b{display:block;font-weight:400;color:#555}
.c2cd span{display:block;color:#999}
.c2cd em{color:#4338a0}
.c2cd.off{background:#fafbfb;opacity:.7}
.c2cd .dg{color:#bbb}
.c2cd.rel{margin-left:20px;position:relative}
.c2cd.rel i{width:11px;height:11px;border-radius:50%;background:#b9b6ef;color:#4338a0;display:flex;align-items:center;justify-content:center}
.c2cd.rel:before{content:"";position:absolute;left:-11px;top:3px;width:8px;height:13px;border:solid #c4c8c8;border-width:0 0 1px 1px}
.c2c{width:612px;flex:none;padding:5px 12px 0 11.5px;position:relative}
.dv{width:70px;height:12.5px;background:#fff;border:1px solid #c5caca;border-radius:2px;display:flex;align-items:center;gap:2px;padding-left:3px;font-size:5.3px;white-space:nowrap;font-weight:600;color:#444}
.dv s{height:7px;border-left:1px solid #bbb}
.c2card{width:590px;height:407px;margin-top:4.5px;background:#fff;box-shadow:0 1px 3px rgba(0,0,0,.14);padding:0 20px 0 13px}
.c2sec{height:30px;display:flex;justify-content:space-between;align-items:center;padding:9px 2px 0 0;margin-left:-10px}
.c2sec h3{font-size:13px;font-weight:300;color:#333;display:flex;align-items:center;gap:3px}
.c2sec2{margin-top:-6px}
.c2g{display:grid;grid-template-columns:267px 267px;column-gap:23.5px;grid-auto-rows:34.4px;padding-top:4px}
.gf{height:28px;position:relative}
.gf label{display:block;height:7px;line-height:7px;font-size:4.8px;color:#999;padding-left:2px;white-space:nowrap}
.gf .v{height:15px;margin-top:3px;border-bottom:1px solid #b9bfbf;display:flex;justify-content:space-between;align-items:center;padding:0 2px;font-size:6.4px;color:#444}
.gf .v svg:only-child{margin-left:auto}
.gf .v.lt{border-bottom:2px solid #e4e7e7}
.sc{height:15px;background:#f3f5f5;line-height:15px;margin-top:1px;padding-left:6px;font-size:5px;color:#444}
.sc a{color:#2f8a9b}
.yc{position:absolute;right:0;top:0;width:7px;height:8px;background:#e6d84e;display:flex;align-items:center;justify-content:center}
.mag:before{content:"";position:absolute;left:-12px;right:-14px;top:-2.5px;bottom:3px;border:solid #e37ee9;border-width:2px 0}
.mb{position:absolute;top:-2.5px;bottom:3px;width:10px;background:#c915d4;color:#f7dafa;display:flex;align-items:center;justify-content:center}
.mbl{left:-11.5px;border-radius:2px 0 0 2px}.mbr{right:-14px;width:11px;border-radius:0 2px 2px 0}
.pm1,.pm2{border-color:#c915d4;color:#c915d4;left:128px}
.pm1{top:-9px}.pm2{top:20px}
.gry:before{content:"";position:absolute;left:-11.5px;right:-13.5px;top:-2px;bottom:3px;border:solid #c2c9ca;border-width:1.5px 0}
.gb{position:absolute;top:-2px;bottom:3px;width:9px;background:#c2c9ca;border-radius:2px}
.gbl{left:-11.5px;border-radius:2px 0 0 2px}.gbr{right:-13.5px;width:11px;border-radius:0 2px 2px 0}
.pg1,.pg2{border-color:#bbb;color:#999;background:#f5f7f7;left:128px}
.pg1{top:-8.5px}.pg2{top:21px}
.wide{width:558px;margin-top:1px}
.wide .v{margin-top:7px;height:17px;padding-right:0}

/* C3 */
.c3m{flex:1;display:flex;min-height:0}
.c3l{width:153px;flex:none;background:#f5f7f7;font-size:5.6px;color:#555}
.c3l li{height:19px;padding:0 6px 0 5px;display:flex;justify-content:space-between;align-items:center;white-space:nowrap}
.c3l li.on{height:20px;background:#dce9ed;border-left:1px solid #00697a;padding-left:4px}
.c3l .lk2{color:#3b8ea1}
.c3r{flex:1;background:#fff;border-left:1px solid #d8dcdc;padding:29px 53px 0 34px;min-width:0;font-size:5.4px;color:#444}
.c3h{height:18px;display:flex;align-items:center;gap:5px}
.c3h h3{font-size:12.6px;font-weight:400;color:#333}
.c3h i{width:7px;height:10px;background:#d5d9d9;text-align:center;line-height:10px;font-size:4px}
.c3h a{color:#3b8ea1;margin-left:9px;font-size:5.4px}
.c3t{border:1px solid #d0d5d5;border-bottom-width:2px;border-right-width:2px}
.c3t col:nth-child(1){width:164px}.c3t col:nth-child(2){width:56px}.c3t col:nth-child(3){width:97px}.c3t col:nth-child(4){width:144px}.c3t col:nth-child(5){width:48px}.c3t col:nth-child(6){width:35px}.c3t col:nth-child(7){width:60px}.c3t col:nth-child(8){width:42px}.c3t col:nth-child(9){width:34px}
.c3t th{height:19.5px;background:#fff;border-bottom:1px solid #dfe3e3;font-size:5.6px;color:#333}
.c3t td{line-height:8.4px;padding:0 4px}
.c3t td+td,.c3t th+th{border-left:1px solid #f2f3f3}
.c3t tr:nth-child(odd) td{background:#f4f6f6}
.c3t .l{color:#3b8ea1;font-size:5.2px}
.h19{height:19px}.h26{height:26.4px}.h34{height:33.7px}.h18{height:18.4px}.h27{height:27.5px}
.p{display:inline-block;border:1px solid #d3d7d7;border-radius:6px;height:12px;line-height:10px;padding:0 4px;margin:1px 3px 1px 0;font-size:5px;color:#555;background:#fff}
.t{display:inline-block;background:#d3e6e3;padding:0 2px;line-height:7px;border-radius:1px;color:#556}
.f{display:inline-block;background:#f6cfcf;padding:0 2px;line-height:7px;border-radius:1px;color:#766}
.o{display:inline-block;background:#a9cfe2;padding:0 2px;line-height:7px;border-radius:1px;color:#456}
.dvw{display:inline-block;background:#f7e29a;padding:0 2px;line-height:7px;border-radius:1px;white-space:nowrap;margin-left:-3px}
```
